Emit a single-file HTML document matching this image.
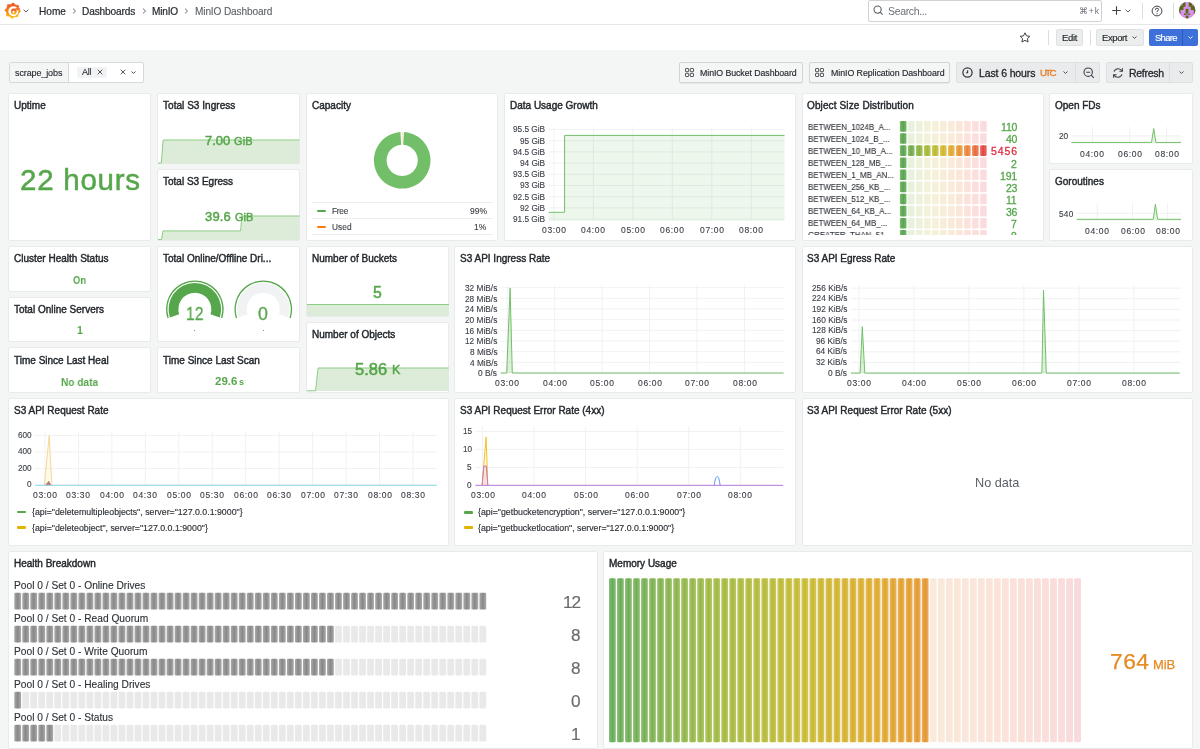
<!DOCTYPE html><html><head><meta charset="utf-8"><style>
*{box-sizing:border-box;margin:0;padding:0}
html,body{width:1200px;height:749px;overflow:hidden;background:#f4f5f5;font-family:"Liberation Sans",sans-serif;color:#24292e;position:relative}
.a{position:absolute}
.t{position:absolute;white-space:nowrap;will-change:transform}
.pn{position:absolute;background:#fff;border:1px solid #e9eaeb;border-radius:2px}
.btn{position:absolute;background:#ecedee;border:1px solid #dadcde;border-radius:2px}
svg{position:absolute;overflow:visible}
</style></head><body>
<div class="a" style="left:0.00px;top:0.00px;width:1200.00px;height:24.00px;background:#fff"></div>
<div class="a" style="left:0.00px;top:24.00px;width:1200.00px;height:1.00px;background:#e6e7e8"></div>
<div class="a" style="left:0.00px;top:25.00px;width:1200.00px;height:25.00px;background:#fff"></div>
<svg style="left:2px;top:0px" width="22" height="22" viewBox="2 0 22 22">
<defs><linearGradient id="lg" x1="0" y1="0" x2="0" y2="1"><stop offset="0" stop-color="#ee4d23"/><stop offset="0.55" stop-color="#f5871f"/><stop offset="1" stop-color="#fac70b"/></linearGradient></defs>
<path fill="url(#lg)" stroke="url(#lg)" stroke-width="0.7" stroke-linejoin="round" d="M13.29 2.83 L15.51 5.11 L18.65 5.62 L18.61 8.81 L20.47 11.39 L18.19 13.61 L17.68 16.75 L14.49 16.71 L11.91 18.57 L9.69 16.29 L6.55 15.78 L6.59 12.59 L4.73 10.01 L7.01 7.79 L7.52 4.65 L10.71 4.69 Z"/>
<circle cx="13.4" cy="11.3" r="5.0" fill="#fff"/>
<path fill="url(#lg)" d="M15.0 8.3 L19.8 8.2 L19.8 10.6 L17.0 10.8 Z"/>
<circle cx="13.8" cy="11.5" r="2.9" fill="url(#lg)"/>
<circle cx="13.6" cy="11.9" r="1.05" fill="#fff"/>
</svg>
<svg style="left:23px;top:9px" width="6" height="4" viewBox="0 0 6 4"><path d="M0.6 0.7 L3 3 L5.4 0.7" fill="none" stroke="#5a5f66" stroke-width="1"/></svg>
<div class="t" style="left:38.70px;top:6.62px;font-size:10.1px;line-height:10.1px;color:#24292e;-webkit-text-stroke:0.2px #24292e;">Home</div>
<svg style="left:71.5px;top:8px" width="5" height="6" viewBox="0 0 5 6"><path d="M1 0.6 L3.6 3 L1 5.4" fill="none" stroke="#5a5f66" stroke-width="0.9"/></svg>
<div class="t" style="left:81.60px;top:6.62px;font-size:10.1px;line-height:10.1px;color:#24292e;letter-spacing:-0.117px;-webkit-text-stroke:0.2px #24292e;">Dashboards</div>
<svg style="left:142px;top:8px" width="5" height="6" viewBox="0 0 5 6"><path d="M1 0.6 L3.6 3 L1 5.4" fill="none" stroke="#5a5f66" stroke-width="0.9"/></svg>
<div class="t" style="left:151.80px;top:6.62px;font-size:10.1px;line-height:10.1px;color:#24292e;letter-spacing:-0.184px;-webkit-text-stroke:0.2px #24292e;">MinIO</div>
<svg style="left:184.3px;top:8px" width="5" height="6" viewBox="0 0 5 6"><path d="M1 0.6 L3.6 3 L1 5.4" fill="none" stroke="#5a5f66" stroke-width="0.9"/></svg>
<div class="t" style="left:194.70px;top:6.62px;font-size:10.1px;line-height:10.1px;color:#5c6168;letter-spacing:-0.132px;-webkit-text-stroke:0.1px #5c6168;">MinIO Dashboard</div>
<div class="a" style="left:868.00px;top:0.00px;width:233.50px;height:21.50px;background:#fff;border:1px solid #d0d2d5;border-radius:2px"></div>
<svg style="left:873px;top:5.3px" width="11" height="11" viewBox="0 0 11 11"><circle cx="4.6" cy="4.6" r="3.6" fill="none" stroke="#5a5f66" stroke-width="1.1"/><path d="M7.2 7.2 L9.6 9.6" stroke="#5a5f66" stroke-width="1.2"/></svg>
<div class="t" style="left:887.50px;top:5.78px;font-size:10.5px;line-height:10.5px;color:#6b7078;letter-spacing:-0.352px;">Search...</div>
<div class="t" style="left:1078.70px;top:6.88px;font-size:8.5px;line-height:8.5px;color:#6b7078;letter-spacing:0.855px;">⌘+k</div>
<svg style="left:1111px;top:5px" width="11" height="11" viewBox="0 0 11 11"><path d="M5.5 1.2 V9.8 M1.2 5.5 H9.8" stroke="#3d4248" stroke-width="1.1"/></svg>
<svg style="left:1125px;top:9px" width="6" height="4" viewBox="0 0 6 4"><path d="M0.6 0.7 L3 3 L5.4 0.7" fill="none" stroke="#5a5f66" stroke-width="1"/></svg>
<div class="a" style="left:1142.00px;top:3.00px;width:1.00px;height:16.00px;background:#dcdee0"></div>
<svg style="left:1151px;top:5px" width="12" height="12" viewBox="0 0 12 12"><circle cx="6" cy="6" r="4.9" fill="none" stroke="#3d4248" stroke-width="1"/><path d="M4.4 4.8 Q4.4 3.2 6 3.2 Q7.6 3.2 7.6 4.6 Q7.6 5.6 6.1 6.2 V7.1" fill="none" stroke="#3d4248" stroke-width="1"/><circle cx="6.05" cy="8.7" r="0.6" fill="#3d4248"/></svg>
<div class="a" style="left:1172.50px;top:3.00px;width:1.00px;height:16.00px;background:#dcdee0"></div>
<svg style="left:1178.5px;top:2.35px" width="16.4" height="16.5" viewBox="120 80 555 560"><defs><clipPath id="av"><ellipse cx="397.5" cy="360" rx="277.5" ry="280"/></clipPath></defs>
<g clip-path="url(#av)"><rect x="100" y="60" width="600" height="600" fill="#d98ef0"/>
<path fill="#566b0e" d="M100 60 H340 V240 H270 V350 H170 V500 H100 Z"/>
<path fill="#566b0e" d="M450 60 H700 V500 H620 V350 H520 V240 H450 Z"/>
<path fill="#d98ef0" d="M100 60 H235 V200 H100 Z M560 60 H700 V200 H560 Z"/>
<rect x="345" y="310" width="95" height="155" fill="#566b0e"/>
<rect x="285" y="470" width="215" height="55" rx="20" fill="#566b0e"/>
<rect x="352" y="482" width="88" height="28" fill="#d98ef0"/>
<rect x="345" y="540" width="95" height="120" fill="#566b0e"/>
</g></svg>
<svg style="left:1019px;top:32px" width="12" height="11" viewBox="0 0 12 11"><path d="M6 0.8 L7.5 3.9 L10.9 4.3 L8.4 6.6 L9.1 10 L6 8.3 L2.9 10 L3.6 6.6 L1.1 4.3 L4.5 3.9 Z" fill="none" stroke="#3d4248" stroke-width="1" stroke-linejoin="round"/></svg>
<div class="a" style="left:1047.50px;top:30.00px;width:1.00px;height:15.00px;background:#dcdee0"></div>
<div class="a" style="left:1056.00px;top:29.00px;width:26.50px;height:16.50px;background:#eceded;border:1px solid #e0e1e3;border-radius:2px"></div>
<div class="t" style="left:1061.50px;top:33.03px;font-size:9.5px;line-height:9.5px;color:#24292e;letter-spacing:-0.290px;-webkit-text-stroke:0.15px #24292e;">Edit</div>
<div class="a" style="left:1090.30px;top:30.00px;width:1.00px;height:15.00px;background:#dcdee0"></div>
<div class="a" style="left:1096.00px;top:29.00px;width:47.70px;height:16.50px;background:#eceded;border:1px solid #e0e1e3;border-radius:2px"></div>
<div class="t" style="left:1101.50px;top:33.03px;font-size:9.5px;line-height:9.5px;color:#24292e;letter-spacing:-0.391px;-webkit-text-stroke:0.15px #24292e;">Export</div>
<svg style="left:1132px;top:36px" width="5" height="3" viewBox="0 0 5 3"><path d="M0.5 0.5 L2.5 2.4 L4.5 0.5" fill="none" stroke="#3d4248" stroke-width="0.9"/></svg>
<div class="a" style="left:1149.00px;top:29.00px;width:49.00px;height:16.50px;background:#3d71d9;border-radius:2px"></div>
<div class="a" style="left:1182.30px;top:29.00px;width:0.80px;height:16.50px;background:#2a5cc0"></div>
<div class="t" style="left:1154.50px;top:33.03px;font-size:9.5px;line-height:9.5px;color:#fff;letter-spacing:-0.712px;-webkit-text-stroke:0.15px #fff;-webkit-text-stroke-color:#fff;">Share</div>
<svg style="left:1188px;top:36px" width="5" height="3" viewBox="0 0 5 3"><path d="M0.5 0.5 L2.5 2.4 L4.5 0.5" fill="none" stroke="#fff" stroke-width="0.9"/></svg>
<div class="a" style="left:9.00px;top:62.00px;width:135.00px;height:20.80px;background:#fff;border:1px solid #d6d8db;border-radius:2px"></div>
<div class="a" style="left:9.50px;top:62.50px;width:59.20px;height:19.80px;background:#f4f5f5;border-right:1px solid #d6d8db"></div>
<div class="t" style="left:15.00px;top:68.65px;font-size:9px;line-height:9px;color:#24292e;letter-spacing:-0.113px;-webkit-text-stroke:0.12px #24292e;">scrape_jobs</div>
<div class="a" style="left:77.00px;top:66.70px;width:29.70px;height:11.30px;background:#f1f2f3;border-radius:2px"></div>
<div class="t" style="left:82.40px;top:68.35px;font-size:9px;line-height:9px;color:#24292e;letter-spacing:-0.201px;-webkit-text-stroke:0.1px #24292e;">All</div>
<svg style="left:96.5px;top:68.7px" width="6" height="6" viewBox="0 0 6 6"><path d="M0.7 0.7 L5.3 5.3 M5.3 0.7 L0.7 5.3" stroke="#3d4248" stroke-width="0.9"/></svg>
<svg style="left:119.8px;top:69.2px" width="6" height="6" viewBox="0 0 6 6"><path d="M0.7 0.7 L5.3 5.3 M5.3 0.7 L0.7 5.3" stroke="#3d4248" stroke-width="0.9"/></svg>
<svg style="left:131.3px;top:70.8px" width="5" height="3" viewBox="0 0 5 3"><path d="M0.5 0.5 L2.5 2.4 L4.5 0.5" fill="none" stroke="#3d4248" stroke-width="0.9"/></svg>
<div class="a" style="left:678.50px;top:61.80px;width:124.50px;height:21.00px;background:#f4f5f5;border:1px solid #d2d4d7;border-radius:2px;box-shadow:0 1px 1px rgba(0,0,0,0.05)"></div>
<svg style="left:685px;top:68px" width="9" height="9" viewBox="0 0 9 9"><rect x="0.5" y="0.5" width="3.2" height="3.2" rx="0.6" fill="none" stroke="#3d4248" stroke-width="0.9"/><rect x="5.3" y="0.5" width="3.2" height="3.2" rx="0.6" fill="none" stroke="#3d4248" stroke-width="0.9"/><rect x="0.5" y="5.3" width="3.2" height="3.2" rx="0.6" fill="none" stroke="#3d4248" stroke-width="0.9"/><rect x="5.3" y="5.3" width="3.2" height="3.2" rx="0.6" fill="none" stroke="#3d4248" stroke-width="0.9"/></svg>
<div class="t" style="left:700.20px;top:68.62px;font-size:8.8px;line-height:8.8px;color:#24292e;letter-spacing:-0.077px;-webkit-text-stroke:0.15px #24292e;">MinIO Bucket Dashboard</div>
<div class="a" style="left:808.50px;top:61.80px;width:141.80px;height:21.00px;background:#f4f5f5;border:1px solid #d2d4d7;border-radius:2px;box-shadow:0 1px 1px rgba(0,0,0,0.05)"></div>
<svg style="left:815px;top:68px" width="9" height="9" viewBox="0 0 9 9"><rect x="0.5" y="0.5" width="3.2" height="3.2" rx="0.6" fill="none" stroke="#3d4248" stroke-width="0.9"/><rect x="5.3" y="0.5" width="3.2" height="3.2" rx="0.6" fill="none" stroke="#3d4248" stroke-width="0.9"/><rect x="0.5" y="5.3" width="3.2" height="3.2" rx="0.6" fill="none" stroke="#3d4248" stroke-width="0.9"/><rect x="5.3" y="5.3" width="3.2" height="3.2" rx="0.6" fill="none" stroke="#3d4248" stroke-width="0.9"/></svg>
<div class="t" style="left:830.70px;top:68.62px;font-size:8.8px;line-height:8.8px;color:#24292e;letter-spacing:-0.052px;-webkit-text-stroke:0.15px #24292e;">MinIO Replication Dashboard</div>
<div class="a" style="left:956.30px;top:62.30px;width:143.70px;height:20.60px;background:#eaebec;border:1px solid #dfe0e2;border-radius:2px"></div>
<div class="a" style="left:1075.30px;top:62.30px;width:0.80px;height:20.60px;background:#dcdee0"></div>
<svg style="left:962.4px;top:66.9px" width="11" height="11" viewBox="0 0 11 11"><circle cx="5.5" cy="5.5" r="4.6" fill="none" stroke="#33383e" stroke-width="1.25"/><path d="M5.6 3.2 V5.7 H4.1" fill="none" stroke="#33383e" stroke-width="1.1"/></svg>
<div class="t" style="left:979.00px;top:67.78px;font-size:10.5px;line-height:10.5px;color:#24292e;letter-spacing:-0.126px;-webkit-text-stroke:0.3px #24292e;">Last 6 hours</div>
<div class="t" style="left:1040.00px;top:68.37px;font-size:9.8px;line-height:9.8px;color:#e8822f;letter-spacing:-1.720px;-webkit-text-stroke:0.35px #e8822f;">UTC</div>
<svg style="left:1062.5px;top:71px" width="5" height="3" viewBox="0 0 5 3"><path d="M0.5 0.5 L2.5 2.4 L4.5 0.5" fill="none" stroke="#3d4248" stroke-width="0.9"/></svg>
<svg style="left:1082.5px;top:66.8px" width="12" height="12" viewBox="0 0 12 12"><circle cx="5.2" cy="5.2" r="4.2" fill="none" stroke="#3d4248" stroke-width="1.1"/><path d="M3.2 5.2 H7.2 M8.2 8.2 L10.8 10.8" stroke="#3d4248" stroke-width="1.1"/></svg>
<div class="a" style="left:1106.00px;top:62.30px;width:86.70px;height:20.60px;background:#eaebec;border:1px solid #dfe0e2;border-radius:2px"></div>
<div class="a" style="left:1169.20px;top:62.30px;width:0.80px;height:20.60px;background:#dcdee0"></div>
<svg style="left:1112px;top:66.8px" width="12" height="12" viewBox="0 0 12 12"><path d="M2 4.6 A4.4 4.4 0 0 1 10 4 M10 7.4 A4.4 4.4 0 0 1 2 8" fill="none" stroke="#3d4248" stroke-width="1.1"/><path d="M10.4 1.2 V4.3 H7.4 M1.6 10.8 V7.7 H4.6" fill="none" stroke="#3d4248" stroke-width="1.1"/></svg>
<div class="t" style="left:1129.00px;top:67.78px;font-size:10.5px;line-height:10.5px;color:#24292e;letter-spacing:-0.294px;-webkit-text-stroke:0.3px #24292e;">Refresh</div>
<svg style="left:1178.7px;top:71px" width="5" height="3" viewBox="0 0 5 3"><path d="M0.5 0.5 L2.5 2.4 L4.5 0.5" fill="none" stroke="#3d4248" stroke-width="0.9"/></svg>
<div class="pn" style="left:8.23px;top:93.10px;width:143.19px;height:147.58px"></div>
<div class="t" style="left:14.13px;top:101.20px;font-size:10px;line-height:10px;color:#24292e;letter-spacing:0.005px;-webkit-text-stroke:0.42px #24292e;">Uptime</div>
<div class="pn" style="left:156.97px;top:93.10px;width:143.19px;height:71.29px"></div>
<div class="t" style="left:162.87px;top:101.20px;font-size:10px;line-height:10px;color:#24292e;letter-spacing:0.040px;-webkit-text-stroke:0.42px #24292e;">Total S3 Ingress</div>
<div class="pn" style="left:156.97px;top:169.39px;width:143.19px;height:71.29px"></div>
<div class="t" style="left:162.87px;top:177.49px;font-size:10px;line-height:10px;color:#24292e;-webkit-text-stroke:0.42px #24292e;">Total S3 Egress</div>
<div class="pn" style="left:305.71px;top:93.10px;width:192.77px;height:147.58px"></div>
<div class="t" style="left:311.61px;top:101.20px;font-size:10px;line-height:10px;color:#24292e;-webkit-text-stroke:0.42px #24292e;">Capacity</div>
<div class="pn" style="left:504.03px;top:93.10px;width:291.93px;height:147.58px"></div>
<div class="t" style="left:509.93px;top:101.20px;font-size:10px;line-height:10px;color:#24292e;-webkit-text-stroke:0.42px #24292e;">Data Usage Growth</div>
<div class="pn" style="left:801.51px;top:93.10px;width:242.35px;height:147.58px"></div>
<div class="t" style="left:807.41px;top:101.20px;font-size:10px;line-height:10px;color:#24292e;letter-spacing:0.125px;-webkit-text-stroke:0.42px #24292e;">Object Size Distribution</div>
<div class="pn" style="left:1049.41px;top:93.10px;width:143.19px;height:71.29px"></div>
<div class="t" style="left:1055.31px;top:101.20px;font-size:10px;line-height:10px;color:#24292e;-webkit-text-stroke:0.42px #24292e;">Open FDs</div>
<div class="pn" style="left:1049.41px;top:169.39px;width:143.19px;height:71.29px"></div>
<div class="t" style="left:1055.31px;top:177.49px;font-size:10px;line-height:10px;color:#24292e;-webkit-text-stroke:0.42px #24292e;">Goroutines</div>
<div class="pn" style="left:8.23px;top:245.68px;width:143.19px;height:45.86px"></div>
<div class="t" style="left:14.13px;top:253.78px;font-size:10px;line-height:10px;color:#24292e;-webkit-text-stroke:0.42px #24292e;">Cluster Health Status</div>
<div class="pn" style="left:8.23px;top:296.54px;width:143.19px;height:45.86px"></div>
<div class="t" style="left:14.13px;top:304.64px;font-size:10px;line-height:10px;color:#24292e;-webkit-text-stroke:0.42px #24292e;">Total Online Servers</div>
<div class="pn" style="left:8.23px;top:347.40px;width:143.19px;height:45.86px"></div>
<div class="t" style="left:14.13px;top:355.50px;font-size:10px;line-height:10px;color:#24292e;-webkit-text-stroke:0.42px #24292e;">Time Since Last Heal</div>
<div class="pn" style="left:156.97px;top:245.68px;width:143.19px;height:96.72px"></div>
<div class="t" style="left:162.87px;top:253.78px;font-size:10px;line-height:10px;color:#24292e;-webkit-text-stroke:0.42px #24292e;">Total Online/Offline Dri...</div>
<div class="pn" style="left:156.97px;top:347.40px;width:143.19px;height:45.86px"></div>
<div class="t" style="left:162.87px;top:355.50px;font-size:10px;line-height:10px;color:#24292e;-webkit-text-stroke:0.42px #24292e;">Time Since Last Scan</div>
<div class="pn" style="left:305.71px;top:245.68px;width:143.19px;height:71.29px"></div>
<div class="t" style="left:311.61px;top:253.78px;font-size:10px;line-height:10px;color:#24292e;-webkit-text-stroke:0.42px #24292e;">Number of Buckets</div>
<div class="pn" style="left:305.71px;top:321.97px;width:143.19px;height:71.29px"></div>
<div class="t" style="left:311.61px;top:330.07px;font-size:10px;line-height:10px;color:#24292e;-webkit-text-stroke:0.42px #24292e;">Number of Objects</div>
<div class="pn" style="left:454.45px;top:245.68px;width:341.51px;height:147.58px"></div>
<div class="t" style="left:460.35px;top:253.78px;font-size:10px;line-height:10px;color:#24292e;-webkit-text-stroke:0.42px #24292e;">S3 API Ingress Rate</div>
<div class="pn" style="left:801.51px;top:245.68px;width:391.09px;height:147.58px"></div>
<div class="t" style="left:807.41px;top:253.78px;font-size:10px;line-height:10px;color:#24292e;-webkit-text-stroke:0.42px #24292e;">S3 API Egress Rate</div>
<div class="pn" style="left:8.23px;top:398.26px;width:440.67px;height:147.58px"></div>
<div class="t" style="left:14.13px;top:406.36px;font-size:10px;line-height:10px;color:#24292e;-webkit-text-stroke:0.42px #24292e;">S3 API Request Rate</div>
<div class="pn" style="left:454.45px;top:398.26px;width:341.51px;height:147.58px"></div>
<div class="t" style="left:460.35px;top:406.36px;font-size:10px;line-height:10px;color:#24292e;-webkit-text-stroke:0.42px #24292e;">S3 API Request Error Rate (4xx)</div>
<div class="pn" style="left:801.51px;top:398.26px;width:391.09px;height:147.58px"></div>
<div class="t" style="left:807.41px;top:406.36px;font-size:10px;line-height:10px;color:#24292e;-webkit-text-stroke:0.42px #24292e;">S3 API Request Error Rate (5xx)</div>
<div class="pn" style="left:8.23px;top:550.84px;width:589.41px;height:198.44px"></div>
<div class="t" style="left:14.13px;top:558.94px;font-size:10px;line-height:10px;color:#24292e;-webkit-text-stroke:0.42px #24292e;">Health Breakdown</div>
<div class="pn" style="left:603.19px;top:550.84px;width:589.41px;height:198.44px"></div>
<div class="t" style="left:609.09px;top:558.94px;font-size:10px;line-height:10px;color:#24292e;-webkit-text-stroke:0.42px #24292e;">Memory Usage</div>
<div class="t" style="left:19.90px;top:164.73px;font-size:29.5px;line-height:29.5px;color:#56a64b;letter-spacing:0.758px;-webkit-text-stroke:0.5px #56a64b;">22 hours</div>
<svg style="left:158.00px;top:138.20px" width="141.80" height="25.60" viewBox="0 0 141.80 25.60"><path d="M0.00 25.10 L3.30 25.10 L5.10 2.00 L141.60 2.00 L141.60 25.60 L0.00 25.60 Z" fill="#dcecd8"/><path d="M0.00 25.10 L3.30 25.10 L5.10 2.00 L141.60 2.00" fill="none" stroke="#8ccc83" stroke-width="1"/></svg>
<div class="t" style="left:204.75px;top:133.95px;font-size:13px;line-height:13px;color:#56a64b;letter-spacing:-0.016px;-webkit-text-stroke:0.5px #56a64b;">7.00</div>
<div class="t" style="left:234.40px;top:135.65px;font-size:11px;line-height:11px;color:#56a64b;letter-spacing:0.181px;-webkit-text-stroke:0.45px #56a64b;">GiB</div>
<svg style="left:158.00px;top:214.30px" width="141.80" height="26.00" viewBox="0 0 141.80 26.00"><path d="M0.00 25.50 L3.50 25.50 L5.00 16.90 L82.60 16.90 L83.90 2.00 L141.60 2.00 L141.60 26.00 L0.00 26.00 Z" fill="#dcecd8"/><path d="M0.00 25.50 L3.50 25.50 L5.00 16.90 L82.60 16.90 L83.90 2.00 L141.60 2.00" fill="none" stroke="#8ccc83" stroke-width="1"/></svg>
<div class="t" style="left:204.75px;top:210.45px;font-size:13px;line-height:13px;color:#56a64b;letter-spacing:0.184px;-webkit-text-stroke:0.5px #56a64b;">39.6</div>
<div class="t" style="left:234.75px;top:212.15px;font-size:11px;line-height:11px;color:#56a64b;letter-spacing:-0.019px;-webkit-text-stroke:0.45px #56a64b;">GiB</div>
<svg style="left:370.00px;top:128.00px" width="64.00" height="64.00" viewBox="0 0 64.00 64.00"><path d="M33.98 4.06 A28.3 28.3 0 1 1 30.42 4.06 L31.22 16.73 A15.6 15.6 0 1 0 33.18 16.73 Z" fill="#73bf69"/><path d="M31.71 4.00 A28.3 28.3 0 0 1 32.69 4.00 L32.47 16.70 A15.6 15.6 0 0 0 31.93 16.70 Z" fill="#fbd6b8"/></svg>
<div class="a" style="left:311.50px;top:201.80px;width:181.20px;height:1.00px;background:#ececee"></div>
<div class="a" style="left:311.50px;top:218.10px;width:181.20px;height:1.00px;background:#ececee"></div>
<div class="a" style="left:311.50px;top:233.80px;width:181.20px;height:1.00px;background:#ececee"></div>
<div class="a" style="left:316.70px;top:209.50px;width:9.40px;height:2.00px;background:#56a64b;border-radius:1px"></div>
<div class="a" style="left:316.70px;top:225.50px;width:9.40px;height:2.00px;background:#ff780a;border-radius:1px"></div>
<div class="t" style="left:331.80px;top:207.25px;font-size:8.3px;line-height:8.3px;color:#3a3f46;letter-spacing:-0.255px;-webkit-text-stroke:0.12px #3a3f46;">Free</div>
<div class="t" style="left:331.80px;top:223.25px;font-size:8.3px;line-height:8.3px;color:#3a3f46;letter-spacing:0.042px;-webkit-text-stroke:0.12px #3a3f46;">Used</div>
<div class="t" style="left:469.69px;top:207.08px;font-size:8.5px;line-height:8.5px;color:#3a3f46;-webkit-text-stroke:0.12px #3a3f46;">99%</div>
<div class="t" style="left:474.41px;top:223.08px;font-size:8.5px;line-height:8.5px;color:#3a3f46;-webkit-text-stroke:0.12px #3a3f46;">1%</div>
<svg style="left:0.00px;top:0.00px" width="1.00" height="1.00" viewBox="0 0 1.00 1.00"></svg>
<svg style="left:0;top:0" width="1200" height="749" viewBox="0 0 1200 749"><path d="M548.70 129.50 H784.50" stroke="#f0f1f2" stroke-width="1"/><path d="M548.70 140.70 H784.50" stroke="#f0f1f2" stroke-width="1"/><path d="M548.70 151.90 H784.50" stroke="#f0f1f2" stroke-width="1"/><path d="M548.70 163.10 H784.50" stroke="#f0f1f2" stroke-width="1"/><path d="M548.70 174.30 H784.50" stroke="#f0f1f2" stroke-width="1"/><path d="M548.70 185.50 H784.50" stroke="#f0f1f2" stroke-width="1"/><path d="M548.70 196.70 H784.50" stroke="#f0f1f2" stroke-width="1"/><path d="M548.70 207.90 H784.50" stroke="#f0f1f2" stroke-width="1"/><path d="M548.70 219.10 H784.50" stroke="#f0f1f2" stroke-width="1"/><path d="M553.90 127.00 V221.00" stroke="#f0f1f2" stroke-width="1"/><path d="M593.37 127.00 V221.00" stroke="#f0f1f2" stroke-width="1"/><path d="M632.84 127.00 V221.00" stroke="#f0f1f2" stroke-width="1"/><path d="M672.31 127.00 V221.00" stroke="#f0f1f2" stroke-width="1"/><path d="M711.78 127.00 V221.00" stroke="#f0f1f2" stroke-width="1"/><path d="M751.25 127.00 V221.00" stroke="#f0f1f2" stroke-width="1"/></svg>
<div class="t" style="left:513.23px;top:125.44px;font-size:8.3px;line-height:8.3px;color:#3a3f46;letter-spacing:-0.046px;-webkit-text-stroke:0.12px #3a3f46;">95.5 GiB</div>
<div class="t" style="left:520.08px;top:136.64px;font-size:8.3px;line-height:8.3px;color:#3a3f46;letter-spacing:-0.051px;-webkit-text-stroke:0.12px #3a3f46;">95 GiB</div>
<div class="t" style="left:513.23px;top:147.84px;font-size:8.3px;line-height:8.3px;color:#3a3f46;letter-spacing:-0.046px;-webkit-text-stroke:0.12px #3a3f46;">94.5 GiB</div>
<div class="t" style="left:520.08px;top:159.04px;font-size:8.3px;line-height:8.3px;color:#3a3f46;letter-spacing:-0.051px;-webkit-text-stroke:0.12px #3a3f46;">94 GiB</div>
<div class="t" style="left:513.23px;top:170.25px;font-size:8.3px;line-height:8.3px;color:#3a3f46;letter-spacing:-0.046px;-webkit-text-stroke:0.12px #3a3f46;">93.5 GiB</div>
<div class="t" style="left:520.08px;top:181.44px;font-size:8.3px;line-height:8.3px;color:#3a3f46;letter-spacing:-0.051px;-webkit-text-stroke:0.12px #3a3f46;">93 GiB</div>
<div class="t" style="left:513.23px;top:192.64px;font-size:8.3px;line-height:8.3px;color:#3a3f46;letter-spacing:-0.046px;-webkit-text-stroke:0.12px #3a3f46;">92.5 GiB</div>
<div class="t" style="left:520.08px;top:203.84px;font-size:8.3px;line-height:8.3px;color:#3a3f46;letter-spacing:-0.051px;-webkit-text-stroke:0.12px #3a3f46;">92 GiB</div>
<div class="t" style="left:513.23px;top:215.04px;font-size:8.3px;line-height:8.3px;color:#3a3f46;letter-spacing:-0.046px;-webkit-text-stroke:0.12px #3a3f46;">91.5 GiB</div>
<div class="t" style="left:541.90px;top:225.97px;font-size:8.5px;line-height:8.5px;color:#3a3f46;letter-spacing:0.683px;-webkit-text-stroke:0.12px #3a3f46;">03:00</div>
<div class="t" style="left:581.37px;top:225.97px;font-size:8.5px;line-height:8.5px;color:#3a3f46;letter-spacing:0.683px;-webkit-text-stroke:0.12px #3a3f46;">04:00</div>
<div class="t" style="left:620.84px;top:225.97px;font-size:8.5px;line-height:8.5px;color:#3a3f46;letter-spacing:0.683px;-webkit-text-stroke:0.12px #3a3f46;">05:00</div>
<div class="t" style="left:660.31px;top:225.97px;font-size:8.5px;line-height:8.5px;color:#3a3f46;letter-spacing:0.683px;-webkit-text-stroke:0.12px #3a3f46;">06:00</div>
<div class="t" style="left:699.78px;top:225.97px;font-size:8.5px;line-height:8.5px;color:#3a3f46;letter-spacing:0.683px;-webkit-text-stroke:0.12px #3a3f46;">07:00</div>
<div class="t" style="left:739.25px;top:225.97px;font-size:8.5px;line-height:8.5px;color:#3a3f46;letter-spacing:0.683px;-webkit-text-stroke:0.12px #3a3f46;">08:00</div>
<svg style="left:0;top:0" width="1200" height="749" viewBox="0 0 1200 749"><path d="M548.70 212.30 L564.60 212.30 L564.60 135.40 L784.50 135.40 L784.5 221 L548.7 221 Z" fill="rgba(115,191,105,0.13)"/><path d="M548.70 212.30 L564.60 212.30 L564.60 135.40 L784.50 135.40" fill="none" stroke="#73bf69" stroke-width="1"/></svg>
<div class="a" style="left:802px;top:110px;width:240px;height:124.5px;overflow:hidden">
<svg style="left:-802px;top:-110px" width="1200" height="749" viewBox="0 0 1200 749"><defs><linearGradient id="og0" x1="0" y1="0" x2="1" y2="0"><stop offset="0" stop-color="#7db973"/><stop offset="0.5" stop-color="#58a54c"/><stop offset="1" stop-color="#7db973"/></linearGradient><linearGradient id="og1" x1="0" y1="0" x2="1" y2="0"><stop offset="0" stop-color="#8fbd6f"/><stop offset="0.5" stop-color="#70ab47"/><stop offset="1" stop-color="#8fbd6f"/></linearGradient><linearGradient id="og2" x1="0" y1="0" x2="1" y2="0"><stop offset="0" stop-color="#a4c368"/><stop offset="0.5" stop-color="#8ab23e"/><stop offset="1" stop-color="#a4c368"/></linearGradient><linearGradient id="og3" x1="0" y1="0" x2="1" y2="0"><stop offset="0" stop-color="#b9c861"/><stop offset="0.5" stop-color="#a5b835"/><stop offset="1" stop-color="#b9c861"/></linearGradient><linearGradient id="og4" x1="0" y1="0" x2="1" y2="0"><stop offset="0" stop-color="#ccc95b"/><stop offset="0.5" stop-color="#bdba2d"/><stop offset="1" stop-color="#ccc95b"/></linearGradient><linearGradient id="og5" x1="0" y1="0" x2="1" y2="0"><stop offset="0" stop-color="#ddc65a"/><stop offset="0.5" stop-color="#d3b62b"/><stop offset="1" stop-color="#ddc65a"/></linearGradient><linearGradient id="og6" x1="0" y1="0" x2="1" y2="0"><stop offset="0" stop-color="#e8bb5c"/><stop offset="0.5" stop-color="#e1a82e"/><stop offset="1" stop-color="#e8bb5c"/></linearGradient><linearGradient id="og7" x1="0" y1="0" x2="1" y2="0"><stop offset="0" stop-color="#edad60"/><stop offset="0.5" stop-color="#e89633"/><stop offset="1" stop-color="#edad60"/></linearGradient><linearGradient id="og8" x1="0" y1="0" x2="1" y2="0"><stop offset="0" stop-color="#ef9e63"/><stop offset="0.5" stop-color="#eb8237"/><stop offset="1" stop-color="#ef9e63"/></linearGradient><linearGradient id="og9" x1="0" y1="0" x2="1" y2="0"><stop offset="0" stop-color="#ef8b65"/><stop offset="0.5" stop-color="#ea6a3a"/><stop offset="1" stop-color="#ef8b65"/></linearGradient><linearGradient id="og10" x1="0" y1="0" x2="1" y2="0"><stop offset="0" stop-color="#e96f69"/><stop offset="0.5" stop-color="#e3463f"/><stop offset="1" stop-color="#e96f69"/></linearGradient></defs><rect x="899.90" y="121.10" width="6.6" height="10.6" rx="1.2" fill="url(#og0)"/><rect x="907.92" y="121.10" width="6.6" height="10.6" rx="1.2" fill="#e8f1dc"/><rect x="915.94" y="121.10" width="6.6" height="10.6" rx="1.2" fill="#edf2db"/><rect x="923.96" y="121.10" width="6.6" height="10.6" rx="1.2" fill="#f1f2d9"/><rect x="931.98" y="121.10" width="6.6" height="10.6" rx="1.2" fill="#f5f1d8"/><rect x="940.00" y="121.10" width="6.6" height="10.6" rx="1.2" fill="#f8eed7"/><rect x="948.02" y="121.10" width="6.6" height="10.6" rx="1.2" fill="#faead8"/><rect x="956.04" y="121.10" width="6.6" height="10.6" rx="1.2" fill="#fbe6d9"/><rect x="964.06" y="121.10" width="6.6" height="10.6" rx="1.2" fill="#fce2da"/><rect x="972.08" y="121.10" width="6.6" height="10.6" rx="1.2" fill="#fcdfdc"/><rect x="980.10" y="121.10" width="6.6" height="10.6" rx="1.2" fill="#fbdcde"/><rect x="899.90" y="133.20" width="6.6" height="10.6" rx="1.2" fill="url(#og0)"/><rect x="907.92" y="133.20" width="6.6" height="10.6" rx="1.2" fill="#e8f1dc"/><rect x="915.94" y="133.20" width="6.6" height="10.6" rx="1.2" fill="#edf2db"/><rect x="923.96" y="133.20" width="6.6" height="10.6" rx="1.2" fill="#f1f2d9"/><rect x="931.98" y="133.20" width="6.6" height="10.6" rx="1.2" fill="#f5f1d8"/><rect x="940.00" y="133.20" width="6.6" height="10.6" rx="1.2" fill="#f8eed7"/><rect x="948.02" y="133.20" width="6.6" height="10.6" rx="1.2" fill="#faead8"/><rect x="956.04" y="133.20" width="6.6" height="10.6" rx="1.2" fill="#fbe6d9"/><rect x="964.06" y="133.20" width="6.6" height="10.6" rx="1.2" fill="#fce2da"/><rect x="972.08" y="133.20" width="6.6" height="10.6" rx="1.2" fill="#fcdfdc"/><rect x="980.10" y="133.20" width="6.6" height="10.6" rx="1.2" fill="#fbdcde"/><rect x="899.90" y="145.30" width="6.6" height="10.6" rx="1.2" fill="url(#og0)"/><rect x="907.92" y="145.30" width="6.6" height="10.6" rx="1.2" fill="url(#og1)"/><rect x="915.94" y="145.30" width="6.6" height="10.6" rx="1.2" fill="url(#og2)"/><rect x="923.96" y="145.30" width="6.6" height="10.6" rx="1.2" fill="url(#og3)"/><rect x="931.98" y="145.30" width="6.6" height="10.6" rx="1.2" fill="url(#og4)"/><rect x="940.00" y="145.30" width="6.6" height="10.6" rx="1.2" fill="url(#og5)"/><rect x="948.02" y="145.30" width="6.6" height="10.6" rx="1.2" fill="url(#og6)"/><rect x="956.04" y="145.30" width="6.6" height="10.6" rx="1.2" fill="url(#og7)"/><rect x="964.06" y="145.30" width="6.6" height="10.6" rx="1.2" fill="url(#og8)"/><rect x="972.08" y="145.30" width="6.6" height="10.6" rx="1.2" fill="url(#og9)"/><rect x="980.10" y="145.30" width="6.6" height="10.6" rx="1.2" fill="url(#og10)"/><rect x="899.90" y="157.40" width="6.6" height="10.6" rx="1.2" fill="url(#og0)"/><rect x="907.92" y="157.40" width="6.6" height="10.6" rx="1.2" fill="#e8f1dc"/><rect x="915.94" y="157.40" width="6.6" height="10.6" rx="1.2" fill="#edf2db"/><rect x="923.96" y="157.40" width="6.6" height="10.6" rx="1.2" fill="#f1f2d9"/><rect x="931.98" y="157.40" width="6.6" height="10.6" rx="1.2" fill="#f5f1d8"/><rect x="940.00" y="157.40" width="6.6" height="10.6" rx="1.2" fill="#f8eed7"/><rect x="948.02" y="157.40" width="6.6" height="10.6" rx="1.2" fill="#faead8"/><rect x="956.04" y="157.40" width="6.6" height="10.6" rx="1.2" fill="#fbe6d9"/><rect x="964.06" y="157.40" width="6.6" height="10.6" rx="1.2" fill="#fce2da"/><rect x="972.08" y="157.40" width="6.6" height="10.6" rx="1.2" fill="#fcdfdc"/><rect x="980.10" y="157.40" width="6.6" height="10.6" rx="1.2" fill="#fbdcde"/><rect x="899.90" y="169.50" width="6.6" height="10.6" rx="1.2" fill="url(#og0)"/><rect x="907.92" y="169.50" width="6.6" height="10.6" rx="1.2" fill="#e8f1dc"/><rect x="915.94" y="169.50" width="6.6" height="10.6" rx="1.2" fill="#edf2db"/><rect x="923.96" y="169.50" width="6.6" height="10.6" rx="1.2" fill="#f1f2d9"/><rect x="931.98" y="169.50" width="6.6" height="10.6" rx="1.2" fill="#f5f1d8"/><rect x="940.00" y="169.50" width="6.6" height="10.6" rx="1.2" fill="#f8eed7"/><rect x="948.02" y="169.50" width="6.6" height="10.6" rx="1.2" fill="#faead8"/><rect x="956.04" y="169.50" width="6.6" height="10.6" rx="1.2" fill="#fbe6d9"/><rect x="964.06" y="169.50" width="6.6" height="10.6" rx="1.2" fill="#fce2da"/><rect x="972.08" y="169.50" width="6.6" height="10.6" rx="1.2" fill="#fcdfdc"/><rect x="980.10" y="169.50" width="6.6" height="10.6" rx="1.2" fill="#fbdcde"/><rect x="899.90" y="181.60" width="6.6" height="10.6" rx="1.2" fill="url(#og0)"/><rect x="907.92" y="181.60" width="6.6" height="10.6" rx="1.2" fill="#e8f1dc"/><rect x="915.94" y="181.60" width="6.6" height="10.6" rx="1.2" fill="#edf2db"/><rect x="923.96" y="181.60" width="6.6" height="10.6" rx="1.2" fill="#f1f2d9"/><rect x="931.98" y="181.60" width="6.6" height="10.6" rx="1.2" fill="#f5f1d8"/><rect x="940.00" y="181.60" width="6.6" height="10.6" rx="1.2" fill="#f8eed7"/><rect x="948.02" y="181.60" width="6.6" height="10.6" rx="1.2" fill="#faead8"/><rect x="956.04" y="181.60" width="6.6" height="10.6" rx="1.2" fill="#fbe6d9"/><rect x="964.06" y="181.60" width="6.6" height="10.6" rx="1.2" fill="#fce2da"/><rect x="972.08" y="181.60" width="6.6" height="10.6" rx="1.2" fill="#fcdfdc"/><rect x="980.10" y="181.60" width="6.6" height="10.6" rx="1.2" fill="#fbdcde"/><rect x="899.90" y="193.70" width="6.6" height="10.6" rx="1.2" fill="url(#og0)"/><rect x="907.92" y="193.70" width="6.6" height="10.6" rx="1.2" fill="#e8f1dc"/><rect x="915.94" y="193.70" width="6.6" height="10.6" rx="1.2" fill="#edf2db"/><rect x="923.96" y="193.70" width="6.6" height="10.6" rx="1.2" fill="#f1f2d9"/><rect x="931.98" y="193.70" width="6.6" height="10.6" rx="1.2" fill="#f5f1d8"/><rect x="940.00" y="193.70" width="6.6" height="10.6" rx="1.2" fill="#f8eed7"/><rect x="948.02" y="193.70" width="6.6" height="10.6" rx="1.2" fill="#faead8"/><rect x="956.04" y="193.70" width="6.6" height="10.6" rx="1.2" fill="#fbe6d9"/><rect x="964.06" y="193.70" width="6.6" height="10.6" rx="1.2" fill="#fce2da"/><rect x="972.08" y="193.70" width="6.6" height="10.6" rx="1.2" fill="#fcdfdc"/><rect x="980.10" y="193.70" width="6.6" height="10.6" rx="1.2" fill="#fbdcde"/><rect x="899.90" y="205.80" width="6.6" height="10.6" rx="1.2" fill="url(#og0)"/><rect x="907.92" y="205.80" width="6.6" height="10.6" rx="1.2" fill="#e8f1dc"/><rect x="915.94" y="205.80" width="6.6" height="10.6" rx="1.2" fill="#edf2db"/><rect x="923.96" y="205.80" width="6.6" height="10.6" rx="1.2" fill="#f1f2d9"/><rect x="931.98" y="205.80" width="6.6" height="10.6" rx="1.2" fill="#f5f1d8"/><rect x="940.00" y="205.80" width="6.6" height="10.6" rx="1.2" fill="#f8eed7"/><rect x="948.02" y="205.80" width="6.6" height="10.6" rx="1.2" fill="#faead8"/><rect x="956.04" y="205.80" width="6.6" height="10.6" rx="1.2" fill="#fbe6d9"/><rect x="964.06" y="205.80" width="6.6" height="10.6" rx="1.2" fill="#fce2da"/><rect x="972.08" y="205.80" width="6.6" height="10.6" rx="1.2" fill="#fcdfdc"/><rect x="980.10" y="205.80" width="6.6" height="10.6" rx="1.2" fill="#fbdcde"/><rect x="899.90" y="217.90" width="6.6" height="10.6" rx="1.2" fill="url(#og0)"/><rect x="907.92" y="217.90" width="6.6" height="10.6" rx="1.2" fill="#e8f1dc"/><rect x="915.94" y="217.90" width="6.6" height="10.6" rx="1.2" fill="#edf2db"/><rect x="923.96" y="217.90" width="6.6" height="10.6" rx="1.2" fill="#f1f2d9"/><rect x="931.98" y="217.90" width="6.6" height="10.6" rx="1.2" fill="#f5f1d8"/><rect x="940.00" y="217.90" width="6.6" height="10.6" rx="1.2" fill="#f8eed7"/><rect x="948.02" y="217.90" width="6.6" height="10.6" rx="1.2" fill="#faead8"/><rect x="956.04" y="217.90" width="6.6" height="10.6" rx="1.2" fill="#fbe6d9"/><rect x="964.06" y="217.90" width="6.6" height="10.6" rx="1.2" fill="#fce2da"/><rect x="972.08" y="217.90" width="6.6" height="10.6" rx="1.2" fill="#fcdfdc"/><rect x="980.10" y="217.90" width="6.6" height="10.6" rx="1.2" fill="#fbdcde"/><rect x="899.90" y="230.00" width="6.6" height="10.6" rx="1.2" fill="url(#og0)"/><rect x="907.92" y="230.00" width="6.6" height="10.6" rx="1.2" fill="#e8f1dc"/><rect x="915.94" y="230.00" width="6.6" height="10.6" rx="1.2" fill="#edf2db"/><rect x="923.96" y="230.00" width="6.6" height="10.6" rx="1.2" fill="#f1f2d9"/><rect x="931.98" y="230.00" width="6.6" height="10.6" rx="1.2" fill="#f5f1d8"/><rect x="940.00" y="230.00" width="6.6" height="10.6" rx="1.2" fill="#f8eed7"/><rect x="948.02" y="230.00" width="6.6" height="10.6" rx="1.2" fill="#faead8"/><rect x="956.04" y="230.00" width="6.6" height="10.6" rx="1.2" fill="#fbe6d9"/><rect x="964.06" y="230.00" width="6.6" height="10.6" rx="1.2" fill="#fce2da"/><rect x="972.08" y="230.00" width="6.6" height="10.6" rx="1.2" fill="#fcdfdc"/><rect x="980.10" y="230.00" width="6.6" height="10.6" rx="1.2" fill="#fbdcde"/></svg>
<div class="t" style="left:5.80px;top:12.89px;font-size:8.6px;line-height:8.6px;color:#30353b;-webkit-text-stroke:0.12px #30353b;transform:scaleX(0.9170);transform-origin:0 0;">BETWEEN_1024B_A...</div>
<div class="t" style="left:198.60px;top:12.27px;font-size:10.5px;line-height:10.5px;color:#56a64b;letter-spacing:-0.167px;-webkit-text-stroke:0.3px #56a64b;">110</div>
<div class="t" style="left:5.80px;top:24.94px;font-size:8.6px;line-height:8.6px;color:#30353b;-webkit-text-stroke:0.12px #30353b;transform:scaleX(0.9170);transform-origin:0 0;">BETWEEN_1024_B_...</div>
<div class="t" style="left:203.56px;top:24.37px;font-size:10.5px;line-height:10.5px;color:#56a64b;letter-spacing:-0.234px;-webkit-text-stroke:0.3px #56a64b;">40</div>
<div class="t" style="left:5.80px;top:36.99px;font-size:8.6px;line-height:8.6px;color:#30353b;-webkit-text-stroke:0.12px #30353b;transform:scaleX(0.9170);transform-origin:0 0;">BETWEEN_10_MB_A...</div>
<div class="t" style="left:188.84px;top:36.47px;font-size:10.5px;line-height:10.5px;color:#e02f44;letter-spacing:0.934px;-webkit-text-stroke:0.3px #e02f44;">5456</div>
<div class="t" style="left:5.80px;top:49.04px;font-size:8.6px;line-height:8.6px;color:#30353b;-webkit-text-stroke:0.12px #30353b;transform:scaleX(0.9170);transform-origin:0 0;">BETWEEN_128_MB_...</div>
<div class="t" style="left:209.16px;top:48.58px;font-size:10.5px;line-height:10.5px;color:#56a64b;-webkit-text-stroke:0.3px #56a64b;">2</div>
<div class="t" style="left:5.80px;top:61.09px;font-size:8.6px;line-height:8.6px;color:#30353b;-webkit-text-stroke:0.12px #30353b;transform:scaleX(0.9170);transform-origin:0 0;">BETWEEN_1_MB_AN...</div>
<div class="t" style="left:197.83px;top:60.67px;font-size:10.5px;line-height:10.5px;color:#56a64b;letter-spacing:-0.175px;-webkit-text-stroke:0.3px #56a64b;">191</div>
<div class="t" style="left:5.80px;top:73.14px;font-size:8.6px;line-height:8.6px;color:#30353b;-webkit-text-stroke:0.12px #30353b;transform:scaleX(0.9170);transform-origin:0 0;">BETWEEN_256_KB_...</div>
<div class="t" style="left:203.56px;top:72.77px;font-size:10.5px;line-height:10.5px;color:#56a64b;letter-spacing:-0.234px;-webkit-text-stroke:0.3px #56a64b;">23</div>
<div class="t" style="left:5.80px;top:85.19px;font-size:8.6px;line-height:8.6px;color:#30353b;-webkit-text-stroke:0.12px #30353b;transform:scaleX(0.9170);transform-origin:0 0;">BETWEEN_512_KB_...</div>
<div class="t" style="left:204.32px;top:84.87px;font-size:10.5px;line-height:10.5px;color:#56a64b;letter-spacing:-0.218px;-webkit-text-stroke:0.3px #56a64b;">11</div>
<div class="t" style="left:5.80px;top:97.24px;font-size:8.6px;line-height:8.6px;color:#30353b;-webkit-text-stroke:0.12px #30353b;transform:scaleX(0.9170);transform-origin:0 0;">BETWEEN_64_KB_A...</div>
<div class="t" style="left:203.56px;top:96.97px;font-size:10.5px;line-height:10.5px;color:#56a64b;letter-spacing:-0.234px;-webkit-text-stroke:0.3px #56a64b;">36</div>
<div class="t" style="left:5.80px;top:109.29px;font-size:8.6px;line-height:8.6px;color:#30353b;-webkit-text-stroke:0.12px #30353b;transform:scaleX(0.9170);transform-origin:0 0;">BETWEEN_64_MB_...</div>
<div class="t" style="left:209.16px;top:109.08px;font-size:10.5px;line-height:10.5px;color:#56a64b;-webkit-text-stroke:0.3px #56a64b;">7</div>
<div class="t" style="left:5.80px;top:121.34px;font-size:8.6px;line-height:8.6px;color:#30353b;-webkit-text-stroke:0.12px #30353b;transform:scaleX(0.9170);transform-origin:0 0;">GREATER_THAN_51...</div>
<div class="t" style="left:209.16px;top:121.17px;font-size:10.5px;line-height:10.5px;color:#56a64b;-webkit-text-stroke:0.3px #56a64b;">8</div>
</div>
<svg style="left:0.00px;top:0.00px" width="1.00" height="1.00" viewBox="0 0 1.00 1.00"></svg>
<svg style="left:0;top:0" width="1200" height="749" viewBox="0 0 1200 749"><path d="M1071.40 135.90 H1181.00" stroke="#f0f1f2" stroke-width="1"/><path d="M1092.40 126.75 V143.00" stroke="#f0f1f2" stroke-width="1"/><path d="M1129.70 126.75 V143.00" stroke="#f0f1f2" stroke-width="1"/><path d="M1166.70 126.75 V143.00" stroke="#f0f1f2" stroke-width="1"/></svg>
<div class="t" style="left:1058.80px;top:132.34px;font-size:8.3px;line-height:8.3px;color:#3a3f46;letter-spacing:-0.231px;-webkit-text-stroke:0.12px #3a3f46;">20</div>
<div class="t" style="left:1080.40px;top:150.38px;font-size:8.5px;line-height:8.5px;color:#3a3f46;letter-spacing:0.683px;-webkit-text-stroke:0.12px #3a3f46;">04:00</div>
<div class="t" style="left:1117.70px;top:150.38px;font-size:8.5px;line-height:8.5px;color:#3a3f46;letter-spacing:0.683px;-webkit-text-stroke:0.12px #3a3f46;">06:00</div>
<div class="t" style="left:1154.70px;top:150.38px;font-size:8.5px;line-height:8.5px;color:#3a3f46;letter-spacing:0.683px;-webkit-text-stroke:0.12px #3a3f46;">08:00</div>
<svg style="left:0;top:0" width="1200" height="749" viewBox="0 0 1200 749"><path d="M1071.40 142.40 L1151.50 142.40 L1153.70 128.50 L1155.90 142.40 L1181.00 142.40 L1181 143.5 L1071.4 143.5 Z" fill="rgba(115,191,105,0.2)"/><path d="M1071.40 142.40 L1151.50 142.40 L1153.70 128.50 L1155.90 142.40 L1181.00 142.40" fill="none" stroke="#73bf69" stroke-width="1"/></svg>
<svg style="left:0.00px;top:0.00px" width="1.00" height="1.00" viewBox="0 0 1.00 1.00"></svg>
<svg style="left:0;top:0" width="1200" height="749" viewBox="0 0 1200 749"><path d="M1076.75 213.30 H1181.00" stroke="#f0f1f2" stroke-width="1"/><path d="M1097.30 203.00 V220.00" stroke="#f0f1f2" stroke-width="1"/><path d="M1132.50 203.00 V220.00" stroke="#f0f1f2" stroke-width="1"/><path d="M1167.60 203.00 V220.00" stroke="#f0f1f2" stroke-width="1"/></svg>
<div class="t" style="left:1058.80px;top:209.75px;font-size:8.3px;line-height:8.3px;color:#3a3f46;letter-spacing:0.227px;-webkit-text-stroke:0.12px #3a3f46;">540</div>
<div class="t" style="left:1085.30px;top:226.68px;font-size:8.5px;line-height:8.5px;color:#3a3f46;letter-spacing:0.683px;-webkit-text-stroke:0.12px #3a3f46;">04:00</div>
<div class="t" style="left:1120.50px;top:226.68px;font-size:8.5px;line-height:8.5px;color:#3a3f46;letter-spacing:0.683px;-webkit-text-stroke:0.12px #3a3f46;">06:00</div>
<div class="t" style="left:1155.60px;top:226.68px;font-size:8.5px;line-height:8.5px;color:#3a3f46;letter-spacing:0.683px;-webkit-text-stroke:0.12px #3a3f46;">08:00</div>
<svg style="left:0;top:0" width="1200" height="749" viewBox="0 0 1200 749"><path d="M1076.75 219.30 L1153.20 219.30 L1155.40 204.30 L1157.60 219.30 L1181.00 219.30 L1181 220.5 L1076.75 220.5 Z" fill="rgba(115,191,105,0.2)"/><path d="M1076.75 219.30 L1153.20 219.30 L1155.40 204.30 L1157.60 219.30 L1181.00 219.30" fill="none" stroke="#73bf69" stroke-width="1"/></svg>
<div class="t" style="left:73.25px;top:274.97px;font-size:10.5px;line-height:10.5px;color:#56a64b;font-weight:bold;transform:scaleX(0.8916);transform-origin:0 0;">On</div>
<div class="t" style="left:76.78px;top:325.18px;font-size:10.5px;line-height:10.5px;color:#56a64b;font-weight:bold;">1</div>
<div class="t" style="left:61.30px;top:376.57px;font-size:10.5px;line-height:10.5px;color:#56a64b;font-weight:bold;transform:scaleX(0.9610);transform-origin:0 0;">No data</div>
<div class="t" style="left:214.70px;top:376.32px;font-size:10.8px;line-height:10.8px;color:#56a64b;font-weight:bold;transform:scaleX(1.0705);transform-origin:0 0;">29.6</div>
<div class="t" style="left:239.20px;top:377.85px;font-size:9.0px;line-height:9.0px;color:#56a64b;font-weight:bold;">s</div>
<svg style="left:0;top:0" width="1200" height="749" viewBox="0 0 1200 749"><path d="M167.46 318.15 A28.8 28.8 0 1 1 222.24 318.15 L221.00 317.75 A27.5 27.5 0 1 0 168.70 317.75 Z" fill="#56a64b"/><path d="M169.84 317.38 A26.3 26.3 0 1 1 219.86 317.38 L210.54 314.35 A16.5 16.5 0 1 0 179.16 314.35 Z" fill="#f1f2f3"/><path d="M169.84 317.38 A26.3 26.3 0 1 1 219.86 317.38 L210.54 314.35 A16.5 16.5 0 1 0 179.16 314.35 Z" fill="#56a64b"/></svg>
<div class="t" style="left:185.90px;top:306.27px;font-size:17.8px;line-height:17.8px;color:#56a64b;-webkit-text-stroke:0.3px #56a64b;transform:scaleX(0.8789);transform-origin:0 0;">12</div>
<div class="a" style="left:194.35px;top:330.00px;width:1.00px;height:1.00px;background:#8a8f96"></div>
<svg style="left:0;top:0" width="1200" height="749" viewBox="0 0 1200 749"><path d="M235.91 318.15 A28.8 28.8 0 1 1 290.69 318.15 L289.45 317.75 A27.5 27.5 0 1 0 237.15 317.75 Z" fill="#56a64b"/><path d="M238.29 317.38 A26.3 26.3 0 1 1 288.31 317.38 L278.99 314.35 A16.5 16.5 0 1 0 247.61 314.35 Z" fill="#f1f2f3"/></svg>
<div class="t" style="left:258.13px;top:306.27px;font-size:17.8px;line-height:17.8px;color:#56a64b;-webkit-text-stroke:0.3px #56a64b;">0</div>
<div class="a" style="left:262.80px;top:330.00px;width:1.00px;height:1.00px;background:#8a8f96"></div>
<div class="a" style="left:306.90px;top:304.10px;width:141.90px;height:12.00px;background:#dcecd8"></div>
<div class="a" style="left:306.90px;top:303.60px;width:141.90px;height:1.00px;background:#8ccc83"></div>
<div class="t" style="left:372.86px;top:285.17px;font-size:15.8px;line-height:15.8px;color:#56a64b;-webkit-text-stroke:0.5px #56a64b;">5</div>
<svg style="left:306.90px;top:366.40px" width="141.90" height="25.10" viewBox="0 0 141.90 25.10"><path d="M0.00 24.80 L8.50 24.80 L11.10 2.00 L141.70 2.00 L141.70 25.10 L0.00 25.10 Z" fill="#dcecd8"/><path d="M0.00 24.80 L8.50 24.80 L11.10 2.00 L141.70 2.00" fill="none" stroke="#8ccc83" stroke-width="1"/></svg>
<div class="t" style="left:355.00px;top:360.88px;font-size:16.5px;line-height:16.5px;color:#56a64b;letter-spacing:0.030px;-webkit-text-stroke:0.55px #56a64b;">5.86</div>
<div class="t" style="left:391.60px;top:364.27px;font-size:12.5px;line-height:12.5px;color:#56a64b;-webkit-text-stroke:0.45px #56a64b;">K</div>
<svg style="left:0.00px;top:0.00px" width="1.00" height="1.00" viewBox="0 0 1.00 1.00"></svg>
<svg style="left:0;top:0" width="1200" height="749" viewBox="0 0 1200 749"><path d="M500.60 287.70 H785.00" stroke="#f0f1f2" stroke-width="1"/><path d="M500.60 298.36 H785.00" stroke="#f0f1f2" stroke-width="1"/><path d="M500.60 309.02 H785.00" stroke="#f0f1f2" stroke-width="1"/><path d="M500.60 319.69 H785.00" stroke="#f0f1f2" stroke-width="1"/><path d="M500.60 330.35 H785.00" stroke="#f0f1f2" stroke-width="1"/><path d="M500.60 341.01 H785.00" stroke="#f0f1f2" stroke-width="1"/><path d="M500.60 351.68 H785.00" stroke="#f0f1f2" stroke-width="1"/><path d="M500.60 362.34 H785.00" stroke="#f0f1f2" stroke-width="1"/><path d="M500.60 373.00 H785.00" stroke="#f0f1f2" stroke-width="1"/><path d="M507.20 285.00 V373.50" stroke="#f0f1f2" stroke-width="1"/><path d="M554.66 285.00 V373.50" stroke="#f0f1f2" stroke-width="1"/><path d="M602.12 285.00 V373.50" stroke="#f0f1f2" stroke-width="1"/><path d="M649.58 285.00 V373.50" stroke="#f0f1f2" stroke-width="1"/><path d="M697.04 285.00 V373.50" stroke="#f0f1f2" stroke-width="1"/><path d="M744.50 285.00 V373.50" stroke="#f0f1f2" stroke-width="1"/></svg>
<div class="t" style="left:464.91px;top:284.14px;font-size:8.3px;line-height:8.3px;color:#3a3f46;-webkit-text-stroke:0.12px #3a3f46;">32 MiB/s</div>
<div class="t" style="left:464.91px;top:294.81px;font-size:8.3px;line-height:8.3px;color:#3a3f46;-webkit-text-stroke:0.12px #3a3f46;">28 MiB/s</div>
<div class="t" style="left:464.91px;top:305.47px;font-size:8.3px;line-height:8.3px;color:#3a3f46;-webkit-text-stroke:0.12px #3a3f46;">24 MiB/s</div>
<div class="t" style="left:464.91px;top:316.13px;font-size:8.3px;line-height:8.3px;color:#3a3f46;-webkit-text-stroke:0.12px #3a3f46;">20 MiB/s</div>
<div class="t" style="left:464.91px;top:326.80px;font-size:8.3px;line-height:8.3px;color:#3a3f46;-webkit-text-stroke:0.12px #3a3f46;">16 MiB/s</div>
<div class="t" style="left:464.91px;top:337.46px;font-size:8.3px;line-height:8.3px;color:#3a3f46;-webkit-text-stroke:0.12px #3a3f46;">12 MiB/s</div>
<div class="t" style="left:469.53px;top:348.12px;font-size:8.3px;line-height:8.3px;color:#3a3f46;-webkit-text-stroke:0.12px #3a3f46;">8 MiB/s</div>
<div class="t" style="left:469.53px;top:358.78px;font-size:8.3px;line-height:8.3px;color:#3a3f46;-webkit-text-stroke:0.12px #3a3f46;">4 MiB/s</div>
<div class="t" style="left:478.29px;top:369.44px;font-size:8.3px;line-height:8.3px;color:#3a3f46;-webkit-text-stroke:0.12px #3a3f46;">0 B/s</div>
<div class="t" style="left:495.20px;top:379.17px;font-size:8.5px;line-height:8.5px;color:#3a3f46;letter-spacing:0.683px;-webkit-text-stroke:0.12px #3a3f46;">03:00</div>
<div class="t" style="left:542.66px;top:379.17px;font-size:8.5px;line-height:8.5px;color:#3a3f46;letter-spacing:0.683px;-webkit-text-stroke:0.12px #3a3f46;">04:00</div>
<div class="t" style="left:590.12px;top:379.17px;font-size:8.5px;line-height:8.5px;color:#3a3f46;letter-spacing:0.683px;-webkit-text-stroke:0.12px #3a3f46;">05:00</div>
<div class="t" style="left:637.58px;top:379.17px;font-size:8.5px;line-height:8.5px;color:#3a3f46;letter-spacing:0.683px;-webkit-text-stroke:0.12px #3a3f46;">06:00</div>
<div class="t" style="left:685.04px;top:379.17px;font-size:8.5px;line-height:8.5px;color:#3a3f46;letter-spacing:0.683px;-webkit-text-stroke:0.12px #3a3f46;">07:00</div>
<div class="t" style="left:732.50px;top:379.17px;font-size:8.5px;line-height:8.5px;color:#3a3f46;letter-spacing:0.683px;-webkit-text-stroke:0.12px #3a3f46;">08:00</div>
<svg style="left:0;top:0" width="1200" height="749" viewBox="0 0 1200 749"><path d="M500.60 373.00 L506.70 373.00 L510.10 288.10 L512.30 373.00 L783.50 373.00 Z" fill="rgba(115,191,105,0.25)"/><path d="M500.60 373.00 L506.70 373.00 L510.10 288.10 L512.30 373.00 L783.50 373.00" fill="none" stroke="#73bf69" stroke-width="1"/></svg>
<svg style="left:0.00px;top:0.00px" width="1.00" height="1.00" viewBox="0 0 1.00 1.00"></svg>
<svg style="left:0;top:0" width="1200" height="749" viewBox="0 0 1200 749"><path d="M850.90 288.10 H1180.50" stroke="#f0f1f2" stroke-width="1"/><path d="M850.90 298.73 H1180.50" stroke="#f0f1f2" stroke-width="1"/><path d="M850.90 309.35 H1180.50" stroke="#f0f1f2" stroke-width="1"/><path d="M850.90 319.98 H1180.50" stroke="#f0f1f2" stroke-width="1"/><path d="M850.90 330.60 H1180.50" stroke="#f0f1f2" stroke-width="1"/><path d="M850.90 341.23 H1180.50" stroke="#f0f1f2" stroke-width="1"/><path d="M850.90 351.85 H1180.50" stroke="#f0f1f2" stroke-width="1"/><path d="M850.90 362.48 H1180.50" stroke="#f0f1f2" stroke-width="1"/><path d="M850.90 373.10 H1180.50" stroke="#f0f1f2" stroke-width="1"/><path d="M858.95 285.00 V373.50" stroke="#f0f1f2" stroke-width="1"/><path d="M913.95 285.00 V373.50" stroke="#f0f1f2" stroke-width="1"/><path d="M968.95 285.00 V373.50" stroke="#f0f1f2" stroke-width="1"/><path d="M1023.95 285.00 V373.50" stroke="#f0f1f2" stroke-width="1"/><path d="M1078.95 285.00 V373.50" stroke="#f0f1f2" stroke-width="1"/><path d="M1133.95 285.00 V373.50" stroke="#f0f1f2" stroke-width="1"/></svg>
<div class="t" style="left:811.77px;top:283.65px;font-size:8.3px;line-height:8.3px;color:#3a3f46;-webkit-text-stroke:0.12px #3a3f46;">256 KiB/s</div>
<div class="t" style="left:811.77px;top:294.27px;font-size:8.3px;line-height:8.3px;color:#3a3f46;-webkit-text-stroke:0.12px #3a3f46;">224 KiB/s</div>
<div class="t" style="left:811.77px;top:304.90px;font-size:8.3px;line-height:8.3px;color:#3a3f46;-webkit-text-stroke:0.12px #3a3f46;">192 KiB/s</div>
<div class="t" style="left:811.77px;top:315.52px;font-size:8.3px;line-height:8.3px;color:#3a3f46;-webkit-text-stroke:0.12px #3a3f46;">160 KiB/s</div>
<div class="t" style="left:811.77px;top:326.15px;font-size:8.3px;line-height:8.3px;color:#3a3f46;-webkit-text-stroke:0.12px #3a3f46;">128 KiB/s</div>
<div class="t" style="left:816.39px;top:336.77px;font-size:8.3px;line-height:8.3px;color:#3a3f46;-webkit-text-stroke:0.12px #3a3f46;">96 KiB/s</div>
<div class="t" style="left:816.39px;top:347.40px;font-size:8.3px;line-height:8.3px;color:#3a3f46;-webkit-text-stroke:0.12px #3a3f46;">64 KiB/s</div>
<div class="t" style="left:816.39px;top:358.02px;font-size:8.3px;line-height:8.3px;color:#3a3f46;-webkit-text-stroke:0.12px #3a3f46;">32 KiB/s</div>
<div class="t" style="left:828.39px;top:368.65px;font-size:8.3px;line-height:8.3px;color:#3a3f46;-webkit-text-stroke:0.12px #3a3f46;">0 B/s</div>
<div class="t" style="left:846.95px;top:378.97px;font-size:8.5px;line-height:8.5px;color:#3a3f46;letter-spacing:0.683px;-webkit-text-stroke:0.12px #3a3f46;">03:00</div>
<div class="t" style="left:901.95px;top:378.97px;font-size:8.5px;line-height:8.5px;color:#3a3f46;letter-spacing:0.683px;-webkit-text-stroke:0.12px #3a3f46;">04:00</div>
<div class="t" style="left:956.95px;top:378.97px;font-size:8.5px;line-height:8.5px;color:#3a3f46;letter-spacing:0.683px;-webkit-text-stroke:0.12px #3a3f46;">05:00</div>
<div class="t" style="left:1011.95px;top:378.97px;font-size:8.5px;line-height:8.5px;color:#3a3f46;letter-spacing:0.683px;-webkit-text-stroke:0.12px #3a3f46;">06:00</div>
<div class="t" style="left:1066.95px;top:378.97px;font-size:8.5px;line-height:8.5px;color:#3a3f46;letter-spacing:0.683px;-webkit-text-stroke:0.12px #3a3f46;">07:00</div>
<div class="t" style="left:1121.95px;top:378.97px;font-size:8.5px;line-height:8.5px;color:#3a3f46;letter-spacing:0.683px;-webkit-text-stroke:0.12px #3a3f46;">08:00</div>
<svg style="left:0;top:0" width="1200" height="749" viewBox="0 0 1200 749"><path d="M850.90 373.10 L860.10 373.10 L862.30 326.70 L864.80 373.10 L1041.90 373.10 L1043.50 290.00 L1046.30 373.10 L1179.60 373.10 Z" fill="rgba(115,191,105,0.25)"/><path d="M850.90 373.10 L860.10 373.10 L862.30 326.70 L864.80 373.10 L1041.90 373.10 L1043.50 290.00 L1046.30 373.10 L1179.60 373.10" fill="none" stroke="#73bf69" stroke-width="1"/></svg>
<svg style="left:0.00px;top:0.00px" width="1.00" height="1.00" viewBox="0 0 1.00 1.00"></svg>
<svg style="left:0;top:0" width="1200" height="749" viewBox="0 0 1200 749"><path d="M34.60 435.50 H436.80" stroke="#f0f1f2" stroke-width="1"/><path d="M34.60 451.97 H436.80" stroke="#f0f1f2" stroke-width="1"/><path d="M34.60 468.44 H436.80" stroke="#f0f1f2" stroke-width="1"/><path d="M34.60 484.91 H436.80" stroke="#f0f1f2" stroke-width="1"/><path d="M45.00 431.50 V485.50" stroke="#f0f1f2" stroke-width="1"/><path d="M78.45 431.50 V485.50" stroke="#f0f1f2" stroke-width="1"/><path d="M111.90 431.50 V485.50" stroke="#f0f1f2" stroke-width="1"/><path d="M145.35 431.50 V485.50" stroke="#f0f1f2" stroke-width="1"/><path d="M178.80 431.50 V485.50" stroke="#f0f1f2" stroke-width="1"/><path d="M212.25 431.50 V485.50" stroke="#f0f1f2" stroke-width="1"/><path d="M245.70 431.50 V485.50" stroke="#f0f1f2" stroke-width="1"/><path d="M279.15 431.50 V485.50" stroke="#f0f1f2" stroke-width="1"/><path d="M312.60 431.50 V485.50" stroke="#f0f1f2" stroke-width="1"/><path d="M346.05 431.50 V485.50" stroke="#f0f1f2" stroke-width="1"/><path d="M379.50 431.50 V485.50" stroke="#f0f1f2" stroke-width="1"/><path d="M412.95 431.50 V485.50" stroke="#f0f1f2" stroke-width="1"/></svg>
<div class="t" style="left:18.22px;top:431.93px;font-size:8.2px;line-height:8.2px;color:#3a3f46;-webkit-text-stroke:0.12px #3a3f46;">600</div>
<div class="t" style="left:18.22px;top:448.40px;font-size:8.2px;line-height:8.2px;color:#3a3f46;-webkit-text-stroke:0.12px #3a3f46;">400</div>
<div class="t" style="left:18.22px;top:464.87px;font-size:8.2px;line-height:8.2px;color:#3a3f46;-webkit-text-stroke:0.12px #3a3f46;">200</div>
<div class="t" style="left:27.34px;top:481.34px;font-size:8.2px;line-height:8.2px;color:#3a3f46;-webkit-text-stroke:0.12px #3a3f46;">0</div>
<div class="t" style="left:33.00px;top:490.97px;font-size:8.5px;line-height:8.5px;color:#3a3f46;letter-spacing:0.683px;-webkit-text-stroke:0.12px #3a3f46;">03:00</div>
<div class="t" style="left:66.45px;top:490.97px;font-size:8.5px;line-height:8.5px;color:#3a3f46;letter-spacing:0.683px;-webkit-text-stroke:0.12px #3a3f46;">03:30</div>
<div class="t" style="left:99.90px;top:490.97px;font-size:8.5px;line-height:8.5px;color:#3a3f46;letter-spacing:0.683px;-webkit-text-stroke:0.12px #3a3f46;">04:00</div>
<div class="t" style="left:133.35px;top:490.97px;font-size:8.5px;line-height:8.5px;color:#3a3f46;letter-spacing:0.683px;-webkit-text-stroke:0.12px #3a3f46;">04:30</div>
<div class="t" style="left:166.80px;top:490.97px;font-size:8.5px;line-height:8.5px;color:#3a3f46;letter-spacing:0.683px;-webkit-text-stroke:0.12px #3a3f46;">05:00</div>
<div class="t" style="left:200.25px;top:490.97px;font-size:8.5px;line-height:8.5px;color:#3a3f46;letter-spacing:0.683px;-webkit-text-stroke:0.12px #3a3f46;">05:30</div>
<div class="t" style="left:233.70px;top:490.97px;font-size:8.5px;line-height:8.5px;color:#3a3f46;letter-spacing:0.683px;-webkit-text-stroke:0.12px #3a3f46;">06:00</div>
<div class="t" style="left:267.15px;top:490.97px;font-size:8.5px;line-height:8.5px;color:#3a3f46;letter-spacing:0.683px;-webkit-text-stroke:0.12px #3a3f46;">06:30</div>
<div class="t" style="left:300.60px;top:490.97px;font-size:8.5px;line-height:8.5px;color:#3a3f46;letter-spacing:0.683px;-webkit-text-stroke:0.12px #3a3f46;">07:00</div>
<div class="t" style="left:334.05px;top:490.97px;font-size:8.5px;line-height:8.5px;color:#3a3f46;letter-spacing:0.683px;-webkit-text-stroke:0.12px #3a3f46;">07:30</div>
<div class="t" style="left:367.50px;top:490.97px;font-size:8.5px;line-height:8.5px;color:#3a3f46;letter-spacing:0.683px;-webkit-text-stroke:0.12px #3a3f46;">08:00</div>
<div class="t" style="left:400.95px;top:490.97px;font-size:8.5px;line-height:8.5px;color:#3a3f46;letter-spacing:0.683px;-webkit-text-stroke:0.12px #3a3f46;">08:30</div>
<svg style="left:0;top:0" width="1200" height="749" viewBox="0 0 1200 749"><path d="M44.40 485.30 L49.20 435.70 L51.90 485.30 Z" fill="rgba(250,222,42,0.10)"/><path d="M44.40 485.30 L49.20 435.70 L51.90 485.30" fill="none" stroke="#f6d18e" stroke-width="0.9"/><path d="M45 485.3 L48.8 480.8 L51.3 485.3 Z" fill="rgba(138,77,122,0.75)"/><path d="M45.5 485.3 L48.8 482.5 L50.8 485.3" fill="none" stroke="#e0752d" stroke-width="0.6"/><path d="M35.1 485.3 H436.8" stroke="#8ad8e6" stroke-width="1"/></svg>
<div class="a" style="left:17.00px;top:510.80px;width:8.80px;height:2.60px;background:#56a64b;border-radius:1.3px"></div>
<div class="t" style="left:31.90px;top:507.92px;font-size:8.8px;line-height:8.8px;color:#2c3136;letter-spacing:0.001px;-webkit-text-stroke:0.15px #2c3136;">{api="deletemultipleobjects", server="127.0.0.1:9000"}</div>
<div class="a" style="left:17.00px;top:526.40px;width:8.80px;height:2.60px;background:#e0b400;border-radius:1.3px"></div>
<div class="t" style="left:31.90px;top:523.62px;font-size:8.8px;line-height:8.8px;color:#2c3136;-webkit-text-stroke:0.15px #2c3136;">{api="deleteobject", server="127.0.0.1:9000"}</div>
<svg style="left:0.00px;top:0.00px" width="1.00" height="1.00" viewBox="0 0 1.00 1.00"></svg>
<svg style="left:0;top:0" width="1200" height="749" viewBox="0 0 1200 749"><path d="M475.30 431.40 H783.10" stroke="#f0f1f2" stroke-width="1"/><path d="M475.30 449.43 H783.10" stroke="#f0f1f2" stroke-width="1"/><path d="M475.30 467.46 H783.10" stroke="#f0f1f2" stroke-width="1"/><path d="M475.30 485.49 H783.10" stroke="#f0f1f2" stroke-width="1"/><path d="M482.50 427.00 V485.50" stroke="#f0f1f2" stroke-width="1"/><path d="M534.06 427.00 V485.50" stroke="#f0f1f2" stroke-width="1"/><path d="M585.62 427.00 V485.50" stroke="#f0f1f2" stroke-width="1"/><path d="M637.18 427.00 V485.50" stroke="#f0f1f2" stroke-width="1"/><path d="M688.74 427.00 V485.50" stroke="#f0f1f2" stroke-width="1"/><path d="M740.30 427.00 V485.50" stroke="#f0f1f2" stroke-width="1"/></svg>
<div class="t" style="left:462.78px;top:427.83px;font-size:8.2px;line-height:8.2px;color:#3a3f46;-webkit-text-stroke:0.12px #3a3f46;">15</div>
<div class="t" style="left:462.78px;top:445.86px;font-size:8.2px;line-height:8.2px;color:#3a3f46;-webkit-text-stroke:0.12px #3a3f46;">10</div>
<div class="t" style="left:467.34px;top:463.89px;font-size:8.2px;line-height:8.2px;color:#3a3f46;-webkit-text-stroke:0.12px #3a3f46;">5</div>
<div class="t" style="left:467.34px;top:481.92px;font-size:8.2px;line-height:8.2px;color:#3a3f46;-webkit-text-stroke:0.12px #3a3f46;">0</div>
<div class="t" style="left:470.50px;top:490.97px;font-size:8.5px;line-height:8.5px;color:#3a3f46;letter-spacing:0.683px;-webkit-text-stroke:0.12px #3a3f46;">03:00</div>
<div class="t" style="left:522.06px;top:490.97px;font-size:8.5px;line-height:8.5px;color:#3a3f46;letter-spacing:0.683px;-webkit-text-stroke:0.12px #3a3f46;">04:00</div>
<div class="t" style="left:573.62px;top:490.97px;font-size:8.5px;line-height:8.5px;color:#3a3f46;letter-spacing:0.683px;-webkit-text-stroke:0.12px #3a3f46;">05:00</div>
<div class="t" style="left:625.18px;top:490.97px;font-size:8.5px;line-height:8.5px;color:#3a3f46;letter-spacing:0.683px;-webkit-text-stroke:0.12px #3a3f46;">06:00</div>
<div class="t" style="left:676.74px;top:490.97px;font-size:8.5px;line-height:8.5px;color:#3a3f46;letter-spacing:0.683px;-webkit-text-stroke:0.12px #3a3f46;">07:00</div>
<div class="t" style="left:728.30px;top:490.97px;font-size:8.5px;line-height:8.5px;color:#3a3f46;letter-spacing:0.683px;-webkit-text-stroke:0.12px #3a3f46;">08:00</div>
<svg style="left:0;top:0" width="1200" height="749" viewBox="0 0 1200 749"><path d="M482.10 485.30 L486.10 437.00 L487.80 485.30 Z" fill="rgba(250,222,42,0.12)"/><path d="M482.10 485.30 L486.10 437.00 L487.80 485.30" fill="none" stroke="#f2c02a" stroke-width="1"/><path d="M482.10 485.30 L483.80 466.00 L486.30 466.00 L487.80 485.30 Z" fill="rgba(230,150,160,0.25)"/><path d="M482.10 485.30 L483.80 466.00 L486.30 466.00 L487.80 485.30" fill="none" stroke="#c27ac0" stroke-width="1"/><path d="M714.3 485.3 C715.6 473.5, 718.8 473.5, 720.1 485.3" fill="none" stroke="#5794f2" stroke-width="1"/><path d="M475.3 485.3 H783.1" stroke="#b877d9" stroke-width="1"/></svg>
<div class="a" style="left:463.50px;top:511.20px;width:9.00px;height:2.60px;background:#56a64b;border-radius:1.3px"></div>
<div class="t" style="left:478.30px;top:508.32px;font-size:8.8px;line-height:8.8px;color:#2c3136;letter-spacing:0.002px;-webkit-text-stroke:0.15px #2c3136;">{api="getbucketencryption", server="127.0.0.1:9000"}</div>
<div class="a" style="left:463.50px;top:526.40px;width:9.00px;height:2.60px;background:#e0b400;border-radius:1.3px"></div>
<div class="t" style="left:478.30px;top:523.62px;font-size:8.8px;line-height:8.8px;color:#2c3136;letter-spacing:-0.015px;-webkit-text-stroke:0.15px #2c3136;">{api="getbucketlocation", server="127.0.0.1:9000"}</div>
<div class="t" style="left:974.80px;top:476.90px;font-size:12.7px;line-height:12.7px;color:#5c6168;letter-spacing:-0.013px;">No data</div>
<div class="t" style="left:14.30px;top:581.43px;font-size:10.2px;line-height:10.2px;color:#2c3136;-webkit-text-stroke:0.12px #2c3136;">Pool 0 / Set 0 - Online Drives</div>
<div class="t" style="left:562.60px;top:593.88px;font-size:17.2px;line-height:17.2px;color:#6a6a6a;letter-spacing:-1.130px;-webkit-text-stroke:0.15px #6a6a6a;">12</div>
<div class="t" style="left:14.30px;top:614.43px;font-size:10.2px;line-height:10.2px;color:#2c3136;-webkit-text-stroke:0.12px #2c3136;">Pool 0 / Set 0 - Read Quorum</div>
<div class="t" style="left:571.04px;top:626.93px;font-size:17.2px;line-height:17.2px;color:#6a6a6a;-webkit-text-stroke:0.15px #6a6a6a;">8</div>
<div class="t" style="left:14.30px;top:647.43px;font-size:10.2px;line-height:10.2px;color:#2c3136;-webkit-text-stroke:0.12px #2c3136;">Pool 0 / Set 0 - Write Quorum</div>
<div class="t" style="left:571.04px;top:659.98px;font-size:17.2px;line-height:17.2px;color:#6a6a6a;-webkit-text-stroke:0.15px #6a6a6a;">8</div>
<div class="t" style="left:14.30px;top:680.43px;font-size:10.2px;line-height:10.2px;color:#2c3136;-webkit-text-stroke:0.12px #2c3136;">Pool 0 / Set 0 - Healing Drives</div>
<div class="t" style="left:571.04px;top:693.03px;font-size:17.2px;line-height:17.2px;color:#6a6a6a;-webkit-text-stroke:0.15px #6a6a6a;">0</div>
<div class="t" style="left:14.30px;top:713.43px;font-size:10.2px;line-height:10.2px;color:#2c3136;-webkit-text-stroke:0.12px #2c3136;">Pool 0 / Set 0 - Status</div>
<div class="t" style="left:571.04px;top:726.08px;font-size:17.2px;line-height:17.2px;color:#6a6a6a;-webkit-text-stroke:0.15px #6a6a6a;">1</div>
<svg style="left:0;top:0" width="1200" height="749" viewBox="0 0 1200 749"><defs><linearGradient id="dg" x1="0" y1="0" x2="1" y2="0"><stop offset="0" stop-color="#ababab"/><stop offset="0.5" stop-color="#878787"/><stop offset="1" stop-color="#ababab"/></linearGradient></defs><rect x="14.27" y="592.70" width="6.8" height="16.8" rx="1.3" fill="url(#dg)"/><rect x="22.29" y="592.70" width="6.8" height="16.8" rx="1.3" fill="url(#dg)"/><rect x="30.31" y="592.70" width="6.8" height="16.8" rx="1.3" fill="url(#dg)"/><rect x="38.33" y="592.70" width="6.8" height="16.8" rx="1.3" fill="url(#dg)"/><rect x="46.35" y="592.70" width="6.8" height="16.8" rx="1.3" fill="url(#dg)"/><rect x="54.37" y="592.70" width="6.8" height="16.8" rx="1.3" fill="url(#dg)"/><rect x="62.39" y="592.70" width="6.8" height="16.8" rx="1.3" fill="url(#dg)"/><rect x="70.41" y="592.70" width="6.8" height="16.8" rx="1.3" fill="url(#dg)"/><rect x="78.43" y="592.70" width="6.8" height="16.8" rx="1.3" fill="url(#dg)"/><rect x="86.45" y="592.70" width="6.8" height="16.8" rx="1.3" fill="url(#dg)"/><rect x="94.47" y="592.70" width="6.8" height="16.8" rx="1.3" fill="url(#dg)"/><rect x="102.49" y="592.70" width="6.8" height="16.8" rx="1.3" fill="url(#dg)"/><rect x="110.51" y="592.70" width="6.8" height="16.8" rx="1.3" fill="url(#dg)"/><rect x="118.53" y="592.70" width="6.8" height="16.8" rx="1.3" fill="url(#dg)"/><rect x="126.55" y="592.70" width="6.8" height="16.8" rx="1.3" fill="url(#dg)"/><rect x="134.57" y="592.70" width="6.8" height="16.8" rx="1.3" fill="url(#dg)"/><rect x="142.59" y="592.70" width="6.8" height="16.8" rx="1.3" fill="url(#dg)"/><rect x="150.61" y="592.70" width="6.8" height="16.8" rx="1.3" fill="url(#dg)"/><rect x="158.63" y="592.70" width="6.8" height="16.8" rx="1.3" fill="url(#dg)"/><rect x="166.65" y="592.70" width="6.8" height="16.8" rx="1.3" fill="url(#dg)"/><rect x="174.67" y="592.70" width="6.8" height="16.8" rx="1.3" fill="url(#dg)"/><rect x="182.69" y="592.70" width="6.8" height="16.8" rx="1.3" fill="url(#dg)"/><rect x="190.71" y="592.70" width="6.8" height="16.8" rx="1.3" fill="url(#dg)"/><rect x="198.73" y="592.70" width="6.8" height="16.8" rx="1.3" fill="url(#dg)"/><rect x="206.75" y="592.70" width="6.8" height="16.8" rx="1.3" fill="url(#dg)"/><rect x="214.77" y="592.70" width="6.8" height="16.8" rx="1.3" fill="url(#dg)"/><rect x="222.79" y="592.70" width="6.8" height="16.8" rx="1.3" fill="url(#dg)"/><rect x="230.81" y="592.70" width="6.8" height="16.8" rx="1.3" fill="url(#dg)"/><rect x="238.83" y="592.70" width="6.8" height="16.8" rx="1.3" fill="url(#dg)"/><rect x="246.85" y="592.70" width="6.8" height="16.8" rx="1.3" fill="url(#dg)"/><rect x="254.87" y="592.70" width="6.8" height="16.8" rx="1.3" fill="url(#dg)"/><rect x="262.89" y="592.70" width="6.8" height="16.8" rx="1.3" fill="url(#dg)"/><rect x="270.91" y="592.70" width="6.8" height="16.8" rx="1.3" fill="url(#dg)"/><rect x="278.93" y="592.70" width="6.8" height="16.8" rx="1.3" fill="url(#dg)"/><rect x="286.95" y="592.70" width="6.8" height="16.8" rx="1.3" fill="url(#dg)"/><rect x="294.97" y="592.70" width="6.8" height="16.8" rx="1.3" fill="url(#dg)"/><rect x="302.99" y="592.70" width="6.8" height="16.8" rx="1.3" fill="url(#dg)"/><rect x="311.01" y="592.70" width="6.8" height="16.8" rx="1.3" fill="url(#dg)"/><rect x="319.03" y="592.70" width="6.8" height="16.8" rx="1.3" fill="url(#dg)"/><rect x="327.05" y="592.70" width="6.8" height="16.8" rx="1.3" fill="url(#dg)"/><rect x="335.07" y="592.70" width="6.8" height="16.8" rx="1.3" fill="url(#dg)"/><rect x="343.09" y="592.70" width="6.8" height="16.8" rx="1.3" fill="url(#dg)"/><rect x="351.11" y="592.70" width="6.8" height="16.8" rx="1.3" fill="url(#dg)"/><rect x="359.13" y="592.70" width="6.8" height="16.8" rx="1.3" fill="url(#dg)"/><rect x="367.15" y="592.70" width="6.8" height="16.8" rx="1.3" fill="url(#dg)"/><rect x="375.17" y="592.70" width="6.8" height="16.8" rx="1.3" fill="url(#dg)"/><rect x="383.19" y="592.70" width="6.8" height="16.8" rx="1.3" fill="url(#dg)"/><rect x="391.21" y="592.70" width="6.8" height="16.8" rx="1.3" fill="url(#dg)"/><rect x="399.23" y="592.70" width="6.8" height="16.8" rx="1.3" fill="url(#dg)"/><rect x="407.25" y="592.70" width="6.8" height="16.8" rx="1.3" fill="url(#dg)"/><rect x="415.27" y="592.70" width="6.8" height="16.8" rx="1.3" fill="url(#dg)"/><rect x="423.29" y="592.70" width="6.8" height="16.8" rx="1.3" fill="url(#dg)"/><rect x="431.31" y="592.70" width="6.8" height="16.8" rx="1.3" fill="url(#dg)"/><rect x="439.33" y="592.70" width="6.8" height="16.8" rx="1.3" fill="url(#dg)"/><rect x="447.35" y="592.70" width="6.8" height="16.8" rx="1.3" fill="url(#dg)"/><rect x="455.37" y="592.70" width="6.8" height="16.8" rx="1.3" fill="url(#dg)"/><rect x="463.39" y="592.70" width="6.8" height="16.8" rx="1.3" fill="url(#dg)"/><rect x="471.41" y="592.70" width="6.8" height="16.8" rx="1.3" fill="url(#dg)"/><rect x="479.43" y="592.70" width="6.8" height="16.8" rx="1.3" fill="url(#dg)"/><rect x="14.27" y="625.70" width="6.8" height="16.8" rx="1.3" fill="url(#dg)"/><rect x="22.29" y="625.70" width="6.8" height="16.8" rx="1.3" fill="url(#dg)"/><rect x="30.31" y="625.70" width="6.8" height="16.8" rx="1.3" fill="url(#dg)"/><rect x="38.33" y="625.70" width="6.8" height="16.8" rx="1.3" fill="url(#dg)"/><rect x="46.35" y="625.70" width="6.8" height="16.8" rx="1.3" fill="url(#dg)"/><rect x="54.37" y="625.70" width="6.8" height="16.8" rx="1.3" fill="url(#dg)"/><rect x="62.39" y="625.70" width="6.8" height="16.8" rx="1.3" fill="url(#dg)"/><rect x="70.41" y="625.70" width="6.8" height="16.8" rx="1.3" fill="url(#dg)"/><rect x="78.43" y="625.70" width="6.8" height="16.8" rx="1.3" fill="url(#dg)"/><rect x="86.45" y="625.70" width="6.8" height="16.8" rx="1.3" fill="url(#dg)"/><rect x="94.47" y="625.70" width="6.8" height="16.8" rx="1.3" fill="url(#dg)"/><rect x="102.49" y="625.70" width="6.8" height="16.8" rx="1.3" fill="url(#dg)"/><rect x="110.51" y="625.70" width="6.8" height="16.8" rx="1.3" fill="url(#dg)"/><rect x="118.53" y="625.70" width="6.8" height="16.8" rx="1.3" fill="url(#dg)"/><rect x="126.55" y="625.70" width="6.8" height="16.8" rx="1.3" fill="url(#dg)"/><rect x="134.57" y="625.70" width="6.8" height="16.8" rx="1.3" fill="url(#dg)"/><rect x="142.59" y="625.70" width="6.8" height="16.8" rx="1.3" fill="url(#dg)"/><rect x="150.61" y="625.70" width="6.8" height="16.8" rx="1.3" fill="url(#dg)"/><rect x="158.63" y="625.70" width="6.8" height="16.8" rx="1.3" fill="url(#dg)"/><rect x="166.65" y="625.70" width="6.8" height="16.8" rx="1.3" fill="url(#dg)"/><rect x="174.67" y="625.70" width="6.8" height="16.8" rx="1.3" fill="url(#dg)"/><rect x="182.69" y="625.70" width="6.8" height="16.8" rx="1.3" fill="url(#dg)"/><rect x="190.71" y="625.70" width="6.8" height="16.8" rx="1.3" fill="url(#dg)"/><rect x="198.73" y="625.70" width="6.8" height="16.8" rx="1.3" fill="url(#dg)"/><rect x="206.75" y="625.70" width="6.8" height="16.8" rx="1.3" fill="url(#dg)"/><rect x="214.77" y="625.70" width="6.8" height="16.8" rx="1.3" fill="url(#dg)"/><rect x="222.79" y="625.70" width="6.8" height="16.8" rx="1.3" fill="url(#dg)"/><rect x="230.81" y="625.70" width="6.8" height="16.8" rx="1.3" fill="url(#dg)"/><rect x="238.83" y="625.70" width="6.8" height="16.8" rx="1.3" fill="url(#dg)"/><rect x="246.85" y="625.70" width="6.8" height="16.8" rx="1.3" fill="url(#dg)"/><rect x="254.87" y="625.70" width="6.8" height="16.8" rx="1.3" fill="url(#dg)"/><rect x="262.89" y="625.70" width="6.8" height="16.8" rx="1.3" fill="url(#dg)"/><rect x="270.91" y="625.70" width="6.8" height="16.8" rx="1.3" fill="url(#dg)"/><rect x="278.93" y="625.70" width="6.8" height="16.8" rx="1.3" fill="url(#dg)"/><rect x="286.95" y="625.70" width="6.8" height="16.8" rx="1.3" fill="url(#dg)"/><rect x="294.97" y="625.70" width="6.8" height="16.8" rx="1.3" fill="url(#dg)"/><rect x="302.99" y="625.70" width="6.8" height="16.8" rx="1.3" fill="url(#dg)"/><rect x="311.01" y="625.70" width="6.8" height="16.8" rx="1.3" fill="url(#dg)"/><rect x="319.03" y="625.70" width="6.8" height="16.8" rx="1.3" fill="url(#dg)"/><rect x="327.05" y="625.70" width="6.8" height="16.8" rx="1.3" fill="url(#dg)"/><rect x="335.07" y="625.70" width="6.8" height="16.8" rx="1.3" fill="#e9e9e9"/><rect x="343.09" y="625.70" width="6.8" height="16.8" rx="1.3" fill="#e9e9e9"/><rect x="351.11" y="625.70" width="6.8" height="16.8" rx="1.3" fill="#e9e9e9"/><rect x="359.13" y="625.70" width="6.8" height="16.8" rx="1.3" fill="#e9e9e9"/><rect x="367.15" y="625.70" width="6.8" height="16.8" rx="1.3" fill="#e9e9e9"/><rect x="375.17" y="625.70" width="6.8" height="16.8" rx="1.3" fill="#e9e9e9"/><rect x="383.19" y="625.70" width="6.8" height="16.8" rx="1.3" fill="#e9e9e9"/><rect x="391.21" y="625.70" width="6.8" height="16.8" rx="1.3" fill="#e9e9e9"/><rect x="399.23" y="625.70" width="6.8" height="16.8" rx="1.3" fill="#e9e9e9"/><rect x="407.25" y="625.70" width="6.8" height="16.8" rx="1.3" fill="#e9e9e9"/><rect x="415.27" y="625.70" width="6.8" height="16.8" rx="1.3" fill="#e9e9e9"/><rect x="423.29" y="625.70" width="6.8" height="16.8" rx="1.3" fill="#e9e9e9"/><rect x="431.31" y="625.70" width="6.8" height="16.8" rx="1.3" fill="#e9e9e9"/><rect x="439.33" y="625.70" width="6.8" height="16.8" rx="1.3" fill="#e9e9e9"/><rect x="447.35" y="625.70" width="6.8" height="16.8" rx="1.3" fill="#e9e9e9"/><rect x="455.37" y="625.70" width="6.8" height="16.8" rx="1.3" fill="#e9e9e9"/><rect x="463.39" y="625.70" width="6.8" height="16.8" rx="1.3" fill="#e9e9e9"/><rect x="471.41" y="625.70" width="6.8" height="16.8" rx="1.3" fill="#e9e9e9"/><rect x="479.43" y="625.70" width="6.8" height="16.8" rx="1.3" fill="#e9e9e9"/><rect x="14.27" y="658.70" width="6.8" height="16.8" rx="1.3" fill="url(#dg)"/><rect x="22.29" y="658.70" width="6.8" height="16.8" rx="1.3" fill="url(#dg)"/><rect x="30.31" y="658.70" width="6.8" height="16.8" rx="1.3" fill="url(#dg)"/><rect x="38.33" y="658.70" width="6.8" height="16.8" rx="1.3" fill="url(#dg)"/><rect x="46.35" y="658.70" width="6.8" height="16.8" rx="1.3" fill="url(#dg)"/><rect x="54.37" y="658.70" width="6.8" height="16.8" rx="1.3" fill="url(#dg)"/><rect x="62.39" y="658.70" width="6.8" height="16.8" rx="1.3" fill="url(#dg)"/><rect x="70.41" y="658.70" width="6.8" height="16.8" rx="1.3" fill="url(#dg)"/><rect x="78.43" y="658.70" width="6.8" height="16.8" rx="1.3" fill="url(#dg)"/><rect x="86.45" y="658.70" width="6.8" height="16.8" rx="1.3" fill="url(#dg)"/><rect x="94.47" y="658.70" width="6.8" height="16.8" rx="1.3" fill="url(#dg)"/><rect x="102.49" y="658.70" width="6.8" height="16.8" rx="1.3" fill="url(#dg)"/><rect x="110.51" y="658.70" width="6.8" height="16.8" rx="1.3" fill="url(#dg)"/><rect x="118.53" y="658.70" width="6.8" height="16.8" rx="1.3" fill="url(#dg)"/><rect x="126.55" y="658.70" width="6.8" height="16.8" rx="1.3" fill="url(#dg)"/><rect x="134.57" y="658.70" width="6.8" height="16.8" rx="1.3" fill="url(#dg)"/><rect x="142.59" y="658.70" width="6.8" height="16.8" rx="1.3" fill="url(#dg)"/><rect x="150.61" y="658.70" width="6.8" height="16.8" rx="1.3" fill="url(#dg)"/><rect x="158.63" y="658.70" width="6.8" height="16.8" rx="1.3" fill="url(#dg)"/><rect x="166.65" y="658.70" width="6.8" height="16.8" rx="1.3" fill="url(#dg)"/><rect x="174.67" y="658.70" width="6.8" height="16.8" rx="1.3" fill="url(#dg)"/><rect x="182.69" y="658.70" width="6.8" height="16.8" rx="1.3" fill="url(#dg)"/><rect x="190.71" y="658.70" width="6.8" height="16.8" rx="1.3" fill="url(#dg)"/><rect x="198.73" y="658.70" width="6.8" height="16.8" rx="1.3" fill="url(#dg)"/><rect x="206.75" y="658.70" width="6.8" height="16.8" rx="1.3" fill="url(#dg)"/><rect x="214.77" y="658.70" width="6.8" height="16.8" rx="1.3" fill="url(#dg)"/><rect x="222.79" y="658.70" width="6.8" height="16.8" rx="1.3" fill="url(#dg)"/><rect x="230.81" y="658.70" width="6.8" height="16.8" rx="1.3" fill="url(#dg)"/><rect x="238.83" y="658.70" width="6.8" height="16.8" rx="1.3" fill="url(#dg)"/><rect x="246.85" y="658.70" width="6.8" height="16.8" rx="1.3" fill="url(#dg)"/><rect x="254.87" y="658.70" width="6.8" height="16.8" rx="1.3" fill="url(#dg)"/><rect x="262.89" y="658.70" width="6.8" height="16.8" rx="1.3" fill="url(#dg)"/><rect x="270.91" y="658.70" width="6.8" height="16.8" rx="1.3" fill="url(#dg)"/><rect x="278.93" y="658.70" width="6.8" height="16.8" rx="1.3" fill="url(#dg)"/><rect x="286.95" y="658.70" width="6.8" height="16.8" rx="1.3" fill="url(#dg)"/><rect x="294.97" y="658.70" width="6.8" height="16.8" rx="1.3" fill="url(#dg)"/><rect x="302.99" y="658.70" width="6.8" height="16.8" rx="1.3" fill="url(#dg)"/><rect x="311.01" y="658.70" width="6.8" height="16.8" rx="1.3" fill="url(#dg)"/><rect x="319.03" y="658.70" width="6.8" height="16.8" rx="1.3" fill="url(#dg)"/><rect x="327.05" y="658.70" width="6.8" height="16.8" rx="1.3" fill="url(#dg)"/><rect x="335.07" y="658.70" width="6.8" height="16.8" rx="1.3" fill="#e9e9e9"/><rect x="343.09" y="658.70" width="6.8" height="16.8" rx="1.3" fill="#e9e9e9"/><rect x="351.11" y="658.70" width="6.8" height="16.8" rx="1.3" fill="#e9e9e9"/><rect x="359.13" y="658.70" width="6.8" height="16.8" rx="1.3" fill="#e9e9e9"/><rect x="367.15" y="658.70" width="6.8" height="16.8" rx="1.3" fill="#e9e9e9"/><rect x="375.17" y="658.70" width="6.8" height="16.8" rx="1.3" fill="#e9e9e9"/><rect x="383.19" y="658.70" width="6.8" height="16.8" rx="1.3" fill="#e9e9e9"/><rect x="391.21" y="658.70" width="6.8" height="16.8" rx="1.3" fill="#e9e9e9"/><rect x="399.23" y="658.70" width="6.8" height="16.8" rx="1.3" fill="#e9e9e9"/><rect x="407.25" y="658.70" width="6.8" height="16.8" rx="1.3" fill="#e9e9e9"/><rect x="415.27" y="658.70" width="6.8" height="16.8" rx="1.3" fill="#e9e9e9"/><rect x="423.29" y="658.70" width="6.8" height="16.8" rx="1.3" fill="#e9e9e9"/><rect x="431.31" y="658.70" width="6.8" height="16.8" rx="1.3" fill="#e9e9e9"/><rect x="439.33" y="658.70" width="6.8" height="16.8" rx="1.3" fill="#e9e9e9"/><rect x="447.35" y="658.70" width="6.8" height="16.8" rx="1.3" fill="#e9e9e9"/><rect x="455.37" y="658.70" width="6.8" height="16.8" rx="1.3" fill="#e9e9e9"/><rect x="463.39" y="658.70" width="6.8" height="16.8" rx="1.3" fill="#e9e9e9"/><rect x="471.41" y="658.70" width="6.8" height="16.8" rx="1.3" fill="#e9e9e9"/><rect x="479.43" y="658.70" width="6.8" height="16.8" rx="1.3" fill="#e9e9e9"/><rect x="14.27" y="691.70" width="6.8" height="16.8" rx="1.3" fill="url(#dg)"/><rect x="22.29" y="691.70" width="6.8" height="16.8" rx="1.3" fill="#e9e9e9"/><rect x="30.31" y="691.70" width="6.8" height="16.8" rx="1.3" fill="#e9e9e9"/><rect x="38.33" y="691.70" width="6.8" height="16.8" rx="1.3" fill="#e9e9e9"/><rect x="46.35" y="691.70" width="6.8" height="16.8" rx="1.3" fill="#e9e9e9"/><rect x="54.37" y="691.70" width="6.8" height="16.8" rx="1.3" fill="#e9e9e9"/><rect x="62.39" y="691.70" width="6.8" height="16.8" rx="1.3" fill="#e9e9e9"/><rect x="70.41" y="691.70" width="6.8" height="16.8" rx="1.3" fill="#e9e9e9"/><rect x="78.43" y="691.70" width="6.8" height="16.8" rx="1.3" fill="#e9e9e9"/><rect x="86.45" y="691.70" width="6.8" height="16.8" rx="1.3" fill="#e9e9e9"/><rect x="94.47" y="691.70" width="6.8" height="16.8" rx="1.3" fill="#e9e9e9"/><rect x="102.49" y="691.70" width="6.8" height="16.8" rx="1.3" fill="#e9e9e9"/><rect x="110.51" y="691.70" width="6.8" height="16.8" rx="1.3" fill="#e9e9e9"/><rect x="118.53" y="691.70" width="6.8" height="16.8" rx="1.3" fill="#e9e9e9"/><rect x="126.55" y="691.70" width="6.8" height="16.8" rx="1.3" fill="#e9e9e9"/><rect x="134.57" y="691.70" width="6.8" height="16.8" rx="1.3" fill="#e9e9e9"/><rect x="142.59" y="691.70" width="6.8" height="16.8" rx="1.3" fill="#e9e9e9"/><rect x="150.61" y="691.70" width="6.8" height="16.8" rx="1.3" fill="#e9e9e9"/><rect x="158.63" y="691.70" width="6.8" height="16.8" rx="1.3" fill="#e9e9e9"/><rect x="166.65" y="691.70" width="6.8" height="16.8" rx="1.3" fill="#e9e9e9"/><rect x="174.67" y="691.70" width="6.8" height="16.8" rx="1.3" fill="#e9e9e9"/><rect x="182.69" y="691.70" width="6.8" height="16.8" rx="1.3" fill="#e9e9e9"/><rect x="190.71" y="691.70" width="6.8" height="16.8" rx="1.3" fill="#e9e9e9"/><rect x="198.73" y="691.70" width="6.8" height="16.8" rx="1.3" fill="#e9e9e9"/><rect x="206.75" y="691.70" width="6.8" height="16.8" rx="1.3" fill="#e9e9e9"/><rect x="214.77" y="691.70" width="6.8" height="16.8" rx="1.3" fill="#e9e9e9"/><rect x="222.79" y="691.70" width="6.8" height="16.8" rx="1.3" fill="#e9e9e9"/><rect x="230.81" y="691.70" width="6.8" height="16.8" rx="1.3" fill="#e9e9e9"/><rect x="238.83" y="691.70" width="6.8" height="16.8" rx="1.3" fill="#e9e9e9"/><rect x="246.85" y="691.70" width="6.8" height="16.8" rx="1.3" fill="#e9e9e9"/><rect x="254.87" y="691.70" width="6.8" height="16.8" rx="1.3" fill="#e9e9e9"/><rect x="262.89" y="691.70" width="6.8" height="16.8" rx="1.3" fill="#e9e9e9"/><rect x="270.91" y="691.70" width="6.8" height="16.8" rx="1.3" fill="#e9e9e9"/><rect x="278.93" y="691.70" width="6.8" height="16.8" rx="1.3" fill="#e9e9e9"/><rect x="286.95" y="691.70" width="6.8" height="16.8" rx="1.3" fill="#e9e9e9"/><rect x="294.97" y="691.70" width="6.8" height="16.8" rx="1.3" fill="#e9e9e9"/><rect x="302.99" y="691.70" width="6.8" height="16.8" rx="1.3" fill="#e9e9e9"/><rect x="311.01" y="691.70" width="6.8" height="16.8" rx="1.3" fill="#e9e9e9"/><rect x="319.03" y="691.70" width="6.8" height="16.8" rx="1.3" fill="#e9e9e9"/><rect x="327.05" y="691.70" width="6.8" height="16.8" rx="1.3" fill="#e9e9e9"/><rect x="335.07" y="691.70" width="6.8" height="16.8" rx="1.3" fill="#e9e9e9"/><rect x="343.09" y="691.70" width="6.8" height="16.8" rx="1.3" fill="#e9e9e9"/><rect x="351.11" y="691.70" width="6.8" height="16.8" rx="1.3" fill="#e9e9e9"/><rect x="359.13" y="691.70" width="6.8" height="16.8" rx="1.3" fill="#e9e9e9"/><rect x="367.15" y="691.70" width="6.8" height="16.8" rx="1.3" fill="#e9e9e9"/><rect x="375.17" y="691.70" width="6.8" height="16.8" rx="1.3" fill="#e9e9e9"/><rect x="383.19" y="691.70" width="6.8" height="16.8" rx="1.3" fill="#e9e9e9"/><rect x="391.21" y="691.70" width="6.8" height="16.8" rx="1.3" fill="#e9e9e9"/><rect x="399.23" y="691.70" width="6.8" height="16.8" rx="1.3" fill="#e9e9e9"/><rect x="407.25" y="691.70" width="6.8" height="16.8" rx="1.3" fill="#e9e9e9"/><rect x="415.27" y="691.70" width="6.8" height="16.8" rx="1.3" fill="#e9e9e9"/><rect x="423.29" y="691.70" width="6.8" height="16.8" rx="1.3" fill="#e9e9e9"/><rect x="431.31" y="691.70" width="6.8" height="16.8" rx="1.3" fill="#e9e9e9"/><rect x="439.33" y="691.70" width="6.8" height="16.8" rx="1.3" fill="#e9e9e9"/><rect x="447.35" y="691.70" width="6.8" height="16.8" rx="1.3" fill="#e9e9e9"/><rect x="455.37" y="691.70" width="6.8" height="16.8" rx="1.3" fill="#e9e9e9"/><rect x="463.39" y="691.70" width="6.8" height="16.8" rx="1.3" fill="#e9e9e9"/><rect x="471.41" y="691.70" width="6.8" height="16.8" rx="1.3" fill="#e9e9e9"/><rect x="479.43" y="691.70" width="6.8" height="16.8" rx="1.3" fill="#e9e9e9"/><rect x="14.27" y="724.70" width="6.8" height="16.8" rx="1.3" fill="url(#dg)"/><rect x="22.29" y="724.70" width="6.8" height="16.8" rx="1.3" fill="url(#dg)"/><rect x="30.31" y="724.70" width="6.8" height="16.8" rx="1.3" fill="url(#dg)"/><rect x="38.33" y="724.70" width="6.8" height="16.8" rx="1.3" fill="url(#dg)"/><rect x="46.35" y="724.70" width="6.8" height="16.8" rx="1.3" fill="url(#dg)"/><rect x="54.37" y="724.70" width="6.8" height="16.8" rx="1.3" fill="#e9e9e9"/><rect x="62.39" y="724.70" width="6.8" height="16.8" rx="1.3" fill="#e9e9e9"/><rect x="70.41" y="724.70" width="6.8" height="16.8" rx="1.3" fill="#e9e9e9"/><rect x="78.43" y="724.70" width="6.8" height="16.8" rx="1.3" fill="#e9e9e9"/><rect x="86.45" y="724.70" width="6.8" height="16.8" rx="1.3" fill="#e9e9e9"/><rect x="94.47" y="724.70" width="6.8" height="16.8" rx="1.3" fill="#e9e9e9"/><rect x="102.49" y="724.70" width="6.8" height="16.8" rx="1.3" fill="#e9e9e9"/><rect x="110.51" y="724.70" width="6.8" height="16.8" rx="1.3" fill="#e9e9e9"/><rect x="118.53" y="724.70" width="6.8" height="16.8" rx="1.3" fill="#e9e9e9"/><rect x="126.55" y="724.70" width="6.8" height="16.8" rx="1.3" fill="#e9e9e9"/><rect x="134.57" y="724.70" width="6.8" height="16.8" rx="1.3" fill="#e9e9e9"/><rect x="142.59" y="724.70" width="6.8" height="16.8" rx="1.3" fill="#e9e9e9"/><rect x="150.61" y="724.70" width="6.8" height="16.8" rx="1.3" fill="#e9e9e9"/><rect x="158.63" y="724.70" width="6.8" height="16.8" rx="1.3" fill="#e9e9e9"/><rect x="166.65" y="724.70" width="6.8" height="16.8" rx="1.3" fill="#e9e9e9"/><rect x="174.67" y="724.70" width="6.8" height="16.8" rx="1.3" fill="#e9e9e9"/><rect x="182.69" y="724.70" width="6.8" height="16.8" rx="1.3" fill="#e9e9e9"/><rect x="190.71" y="724.70" width="6.8" height="16.8" rx="1.3" fill="#e9e9e9"/><rect x="198.73" y="724.70" width="6.8" height="16.8" rx="1.3" fill="#e9e9e9"/><rect x="206.75" y="724.70" width="6.8" height="16.8" rx="1.3" fill="#e9e9e9"/><rect x="214.77" y="724.70" width="6.8" height="16.8" rx="1.3" fill="#e9e9e9"/><rect x="222.79" y="724.70" width="6.8" height="16.8" rx="1.3" fill="#e9e9e9"/><rect x="230.81" y="724.70" width="6.8" height="16.8" rx="1.3" fill="#e9e9e9"/><rect x="238.83" y="724.70" width="6.8" height="16.8" rx="1.3" fill="#e9e9e9"/><rect x="246.85" y="724.70" width="6.8" height="16.8" rx="1.3" fill="#e9e9e9"/><rect x="254.87" y="724.70" width="6.8" height="16.8" rx="1.3" fill="#e9e9e9"/><rect x="262.89" y="724.70" width="6.8" height="16.8" rx="1.3" fill="#e9e9e9"/><rect x="270.91" y="724.70" width="6.8" height="16.8" rx="1.3" fill="#e9e9e9"/><rect x="278.93" y="724.70" width="6.8" height="16.8" rx="1.3" fill="#e9e9e9"/><rect x="286.95" y="724.70" width="6.8" height="16.8" rx="1.3" fill="#e9e9e9"/><rect x="294.97" y="724.70" width="6.8" height="16.8" rx="1.3" fill="#e9e9e9"/><rect x="302.99" y="724.70" width="6.8" height="16.8" rx="1.3" fill="#e9e9e9"/><rect x="311.01" y="724.70" width="6.8" height="16.8" rx="1.3" fill="#e9e9e9"/><rect x="319.03" y="724.70" width="6.8" height="16.8" rx="1.3" fill="#e9e9e9"/><rect x="327.05" y="724.70" width="6.8" height="16.8" rx="1.3" fill="#e9e9e9"/><rect x="335.07" y="724.70" width="6.8" height="16.8" rx="1.3" fill="#e9e9e9"/><rect x="343.09" y="724.70" width="6.8" height="16.8" rx="1.3" fill="#e9e9e9"/><rect x="351.11" y="724.70" width="6.8" height="16.8" rx="1.3" fill="#e9e9e9"/><rect x="359.13" y="724.70" width="6.8" height="16.8" rx="1.3" fill="#e9e9e9"/><rect x="367.15" y="724.70" width="6.8" height="16.8" rx="1.3" fill="#e9e9e9"/><rect x="375.17" y="724.70" width="6.8" height="16.8" rx="1.3" fill="#e9e9e9"/><rect x="383.19" y="724.70" width="6.8" height="16.8" rx="1.3" fill="#e9e9e9"/><rect x="391.21" y="724.70" width="6.8" height="16.8" rx="1.3" fill="#e9e9e9"/><rect x="399.23" y="724.70" width="6.8" height="16.8" rx="1.3" fill="#e9e9e9"/><rect x="407.25" y="724.70" width="6.8" height="16.8" rx="1.3" fill="#e9e9e9"/><rect x="415.27" y="724.70" width="6.8" height="16.8" rx="1.3" fill="#e9e9e9"/><rect x="423.29" y="724.70" width="6.8" height="16.8" rx="1.3" fill="#e9e9e9"/><rect x="431.31" y="724.70" width="6.8" height="16.8" rx="1.3" fill="#e9e9e9"/><rect x="439.33" y="724.70" width="6.8" height="16.8" rx="1.3" fill="#e9e9e9"/><rect x="447.35" y="724.70" width="6.8" height="16.8" rx="1.3" fill="#e9e9e9"/><rect x="455.37" y="724.70" width="6.8" height="16.8" rx="1.3" fill="#e9e9e9"/><rect x="463.39" y="724.70" width="6.8" height="16.8" rx="1.3" fill="#e9e9e9"/><rect x="471.41" y="724.70" width="6.8" height="16.8" rx="1.3" fill="#e9e9e9"/><rect x="479.43" y="724.70" width="6.8" height="16.8" rx="1.3" fill="#e9e9e9"/></svg>
<svg style="left:0;top:0" width="1200" height="749" viewBox="0 0 1200 749"><defs><linearGradient id="mg0" x1="0" y1="0" x2="1" y2="0"><stop offset="0" stop-color="#89bf7f"/><stop offset="0.5" stop-color="#64ab57"/><stop offset="1" stop-color="#89bf7f"/></linearGradient><linearGradient id="mg1" x1="0" y1="0" x2="1" y2="0"><stop offset="0" stop-color="#8dc07e"/><stop offset="0.5" stop-color="#69ac55"/><stop offset="1" stop-color="#8dc07e"/></linearGradient><linearGradient id="mg2" x1="0" y1="0" x2="1" y2="0"><stop offset="0" stop-color="#91c17c"/><stop offset="0.5" stop-color="#6ead53"/><stop offset="1" stop-color="#91c17c"/></linearGradient><linearGradient id="mg3" x1="0" y1="0" x2="1" y2="0"><stop offset="0" stop-color="#94c17c"/><stop offset="0.5" stop-color="#72ae52"/><stop offset="1" stop-color="#94c17c"/></linearGradient><linearGradient id="mg4" x1="0" y1="0" x2="1" y2="0"><stop offset="0" stop-color="#98c27a"/><stop offset="0.5" stop-color="#77af50"/><stop offset="1" stop-color="#98c27a"/></linearGradient><linearGradient id="mg5" x1="0" y1="0" x2="1" y2="0"><stop offset="0" stop-color="#9bc378"/><stop offset="0.5" stop-color="#7cb04e"/><stop offset="1" stop-color="#9bc378"/></linearGradient><linearGradient id="mg6" x1="0" y1="0" x2="1" y2="0"><stop offset="0" stop-color="#9ec477"/><stop offset="0.5" stop-color="#80b24c"/><stop offset="1" stop-color="#9ec477"/></linearGradient><linearGradient id="mg7" x1="0" y1="0" x2="1" y2="0"><stop offset="0" stop-color="#a2c575"/><stop offset="0.5" stop-color="#85b34a"/><stop offset="1" stop-color="#a2c575"/></linearGradient><linearGradient id="mg8" x1="0" y1="0" x2="1" y2="0"><stop offset="0" stop-color="#a6c674"/><stop offset="0.5" stop-color="#8ab448"/><stop offset="1" stop-color="#a6c674"/></linearGradient><linearGradient id="mg9" x1="0" y1="0" x2="1" y2="0"><stop offset="0" stop-color="#aac772"/><stop offset="0.5" stop-color="#8fb546"/><stop offset="1" stop-color="#aac772"/></linearGradient><linearGradient id="mg10" x1="0" y1="0" x2="1" y2="0"><stop offset="0" stop-color="#aec872"/><stop offset="0.5" stop-color="#94b645"/><stop offset="1" stop-color="#aec872"/></linearGradient><linearGradient id="mg11" x1="0" y1="0" x2="1" y2="0"><stop offset="0" stop-color="#b1c870"/><stop offset="0.5" stop-color="#98b743"/><stop offset="1" stop-color="#b1c870"/></linearGradient><linearGradient id="mg12" x1="0" y1="0" x2="1" y2="0"><stop offset="0" stop-color="#b5c96f"/><stop offset="0.5" stop-color="#9db841"/><stop offset="1" stop-color="#b5c96f"/></linearGradient><linearGradient id="mg13" x1="0" y1="0" x2="1" y2="0"><stop offset="0" stop-color="#b7c96d"/><stop offset="0.5" stop-color="#a0b83f"/><stop offset="1" stop-color="#b7c96d"/></linearGradient><linearGradient id="mg14" x1="0" y1="0" x2="1" y2="0"><stop offset="0" stop-color="#bac96c"/><stop offset="0.5" stop-color="#a4b83e"/><stop offset="1" stop-color="#bac96c"/></linearGradient><linearGradient id="mg15" x1="0" y1="0" x2="1" y2="0"><stop offset="0" stop-color="#bcc96b"/><stop offset="0.5" stop-color="#a7b83c"/><stop offset="1" stop-color="#bcc96b"/></linearGradient><linearGradient id="mg16" x1="0" y1="0" x2="1" y2="0"><stop offset="0" stop-color="#bfc96a"/><stop offset="0.5" stop-color="#abb83b"/><stop offset="1" stop-color="#bfc96a"/></linearGradient><linearGradient id="mg17" x1="0" y1="0" x2="1" y2="0"><stop offset="0" stop-color="#c1c969"/><stop offset="0.5" stop-color="#aeb839"/><stop offset="1" stop-color="#c1c969"/></linearGradient><linearGradient id="mg18" x1="0" y1="0" x2="1" y2="0"><stop offset="0" stop-color="#c4c968"/><stop offset="0.5" stop-color="#b2b838"/><stop offset="1" stop-color="#c4c968"/></linearGradient><linearGradient id="mg19" x1="0" y1="0" x2="1" y2="0"><stop offset="0" stop-color="#c7ca66"/><stop offset="0.5" stop-color="#b5b936"/><stop offset="1" stop-color="#c7ca66"/></linearGradient><linearGradient id="mg20" x1="0" y1="0" x2="1" y2="0"><stop offset="0" stop-color="#c9ca65"/><stop offset="0.5" stop-color="#b8b934"/><stop offset="1" stop-color="#c9ca65"/></linearGradient><linearGradient id="mg21" x1="0" y1="0" x2="1" y2="0"><stop offset="0" stop-color="#ccca64"/><stop offset="0.5" stop-color="#bcb933"/><stop offset="1" stop-color="#ccca64"/></linearGradient><linearGradient id="mg22" x1="0" y1="0" x2="1" y2="0"><stop offset="0" stop-color="#ceca62"/><stop offset="0.5" stop-color="#bfb931"/><stop offset="1" stop-color="#ceca62"/></linearGradient><linearGradient id="mg23" x1="0" y1="0" x2="1" y2="0"><stop offset="0" stop-color="#d1ca62"/><stop offset="0.5" stop-color="#c3b930"/><stop offset="1" stop-color="#d1ca62"/></linearGradient><linearGradient id="mg24" x1="0" y1="0" x2="1" y2="0"><stop offset="0" stop-color="#d4ca60"/><stop offset="0.5" stop-color="#c6b92e"/><stop offset="1" stop-color="#d4ca60"/></linearGradient><linearGradient id="mg25" x1="0" y1="0" x2="1" y2="0"><stop offset="0" stop-color="#d6c860"/><stop offset="0.5" stop-color="#c9b72e"/><stop offset="1" stop-color="#d6c860"/></linearGradient><linearGradient id="mg26" x1="0" y1="0" x2="1" y2="0"><stop offset="0" stop-color="#d7c75f"/><stop offset="0.5" stop-color="#cbb52d"/><stop offset="1" stop-color="#d7c75f"/></linearGradient><linearGradient id="mg27" x1="0" y1="0" x2="1" y2="0"><stop offset="0" stop-color="#dac55f"/><stop offset="0.5" stop-color="#ceb32d"/><stop offset="1" stop-color="#dac55f"/></linearGradient><linearGradient id="mg28" x1="0" y1="0" x2="1" y2="0"><stop offset="0" stop-color="#dcc45f"/><stop offset="0.5" stop-color="#d1b12c"/><stop offset="1" stop-color="#dcc45f"/></linearGradient><linearGradient id="mg29" x1="0" y1="0" x2="1" y2="0"><stop offset="0" stop-color="#dec35f"/><stop offset="0.5" stop-color="#d3b02c"/><stop offset="1" stop-color="#dec35f"/></linearGradient><linearGradient id="mg30" x1="0" y1="0" x2="1" y2="0"><stop offset="0" stop-color="#e0c15e"/><stop offset="0.5" stop-color="#d6ae2b"/><stop offset="1" stop-color="#e0c15e"/></linearGradient><linearGradient id="mg31" x1="0" y1="0" x2="1" y2="0"><stop offset="0" stop-color="#e2c05e"/><stop offset="0.5" stop-color="#d9ac2b"/><stop offset="1" stop-color="#e2c05e"/></linearGradient><linearGradient id="mg32" x1="0" y1="0" x2="1" y2="0"><stop offset="0" stop-color="#e4be5d"/><stop offset="0.5" stop-color="#dbaa2a"/><stop offset="1" stop-color="#e4be5d"/></linearGradient><linearGradient id="mg33" x1="0" y1="0" x2="1" y2="0"><stop offset="0" stop-color="#e6bd5d"/><stop offset="0.5" stop-color="#dea82a"/><stop offset="1" stop-color="#e6bd5d"/></linearGradient><linearGradient id="mg34" x1="0" y1="0" x2="1" y2="0"><stop offset="0" stop-color="#e7bb5e"/><stop offset="0.5" stop-color="#dfa52b"/><stop offset="1" stop-color="#e7bb5e"/></linearGradient><linearGradient id="mg35" x1="0" y1="0" x2="1" y2="0"><stop offset="0" stop-color="#e7b85f"/><stop offset="0.5" stop-color="#e0a22c"/><stop offset="1" stop-color="#e7b85f"/></linearGradient><linearGradient id="mg36" x1="0" y1="0" x2="1" y2="0"><stop offset="0" stop-color="#e8b65f"/><stop offset="0.5" stop-color="#e19f2c"/><stop offset="1" stop-color="#e8b65f"/></linearGradient><linearGradient id="mg37" x1="0" y1="0" x2="1" y2="0"><stop offset="0" stop-color="#e9b45f"/><stop offset="0.5" stop-color="#e29c2d"/><stop offset="1" stop-color="#e9b45f"/></linearGradient><linearGradient id="mg38" x1="0" y1="0" x2="1" y2="0"><stop offset="0" stop-color="#eab160"/><stop offset="0.5" stop-color="#e3992e"/><stop offset="1" stop-color="#eab160"/></linearGradient><linearGradient id="mg39" x1="0" y1="0" x2="1" y2="0"><stop offset="0" stop-color="#eaaf61"/><stop offset="0.5" stop-color="#e4962f"/><stop offset="1" stop-color="#eaaf61"/></linearGradient></defs><rect x="609.00" y="578.3" width="6.8" height="164" rx="1.3" fill="url(#mg0)"/><rect x="617.02" y="578.3" width="6.8" height="164" rx="1.3" fill="url(#mg1)"/><rect x="625.04" y="578.3" width="6.8" height="164" rx="1.3" fill="url(#mg2)"/><rect x="633.06" y="578.3" width="6.8" height="164" rx="1.3" fill="url(#mg3)"/><rect x="641.08" y="578.3" width="6.8" height="164" rx="1.3" fill="url(#mg4)"/><rect x="649.10" y="578.3" width="6.8" height="164" rx="1.3" fill="url(#mg5)"/><rect x="657.12" y="578.3" width="6.8" height="164" rx="1.3" fill="url(#mg6)"/><rect x="665.14" y="578.3" width="6.8" height="164" rx="1.3" fill="url(#mg7)"/><rect x="673.16" y="578.3" width="6.8" height="164" rx="1.3" fill="url(#mg8)"/><rect x="681.18" y="578.3" width="6.8" height="164" rx="1.3" fill="url(#mg9)"/><rect x="689.20" y="578.3" width="6.8" height="164" rx="1.3" fill="url(#mg10)"/><rect x="697.22" y="578.3" width="6.8" height="164" rx="1.3" fill="url(#mg11)"/><rect x="705.24" y="578.3" width="6.8" height="164" rx="1.3" fill="url(#mg12)"/><rect x="713.26" y="578.3" width="6.8" height="164" rx="1.3" fill="url(#mg13)"/><rect x="721.28" y="578.3" width="6.8" height="164" rx="1.3" fill="url(#mg14)"/><rect x="729.30" y="578.3" width="6.8" height="164" rx="1.3" fill="url(#mg15)"/><rect x="737.32" y="578.3" width="6.8" height="164" rx="1.3" fill="url(#mg16)"/><rect x="745.34" y="578.3" width="6.8" height="164" rx="1.3" fill="url(#mg17)"/><rect x="753.36" y="578.3" width="6.8" height="164" rx="1.3" fill="url(#mg18)"/><rect x="761.38" y="578.3" width="6.8" height="164" rx="1.3" fill="url(#mg19)"/><rect x="769.40" y="578.3" width="6.8" height="164" rx="1.3" fill="url(#mg20)"/><rect x="777.42" y="578.3" width="6.8" height="164" rx="1.3" fill="url(#mg21)"/><rect x="785.44" y="578.3" width="6.8" height="164" rx="1.3" fill="url(#mg22)"/><rect x="793.46" y="578.3" width="6.8" height="164" rx="1.3" fill="url(#mg23)"/><rect x="801.48" y="578.3" width="6.8" height="164" rx="1.3" fill="url(#mg24)"/><rect x="809.50" y="578.3" width="6.8" height="164" rx="1.3" fill="url(#mg25)"/><rect x="817.52" y="578.3" width="6.8" height="164" rx="1.3" fill="url(#mg26)"/><rect x="825.54" y="578.3" width="6.8" height="164" rx="1.3" fill="url(#mg27)"/><rect x="833.56" y="578.3" width="6.8" height="164" rx="1.3" fill="url(#mg28)"/><rect x="841.58" y="578.3" width="6.8" height="164" rx="1.3" fill="url(#mg29)"/><rect x="849.60" y="578.3" width="6.8" height="164" rx="1.3" fill="url(#mg30)"/><rect x="857.62" y="578.3" width="6.8" height="164" rx="1.3" fill="url(#mg31)"/><rect x="865.64" y="578.3" width="6.8" height="164" rx="1.3" fill="url(#mg32)"/><rect x="873.66" y="578.3" width="6.8" height="164" rx="1.3" fill="url(#mg33)"/><rect x="881.68" y="578.3" width="6.8" height="164" rx="1.3" fill="url(#mg34)"/><rect x="889.70" y="578.3" width="6.8" height="164" rx="1.3" fill="url(#mg35)"/><rect x="897.72" y="578.3" width="6.8" height="164" rx="1.3" fill="url(#mg36)"/><rect x="905.74" y="578.3" width="6.8" height="164" rx="1.3" fill="url(#mg37)"/><rect x="913.76" y="578.3" width="6.8" height="164" rx="1.3" fill="url(#mg38)"/><rect x="921.78" y="578.3" width="6.8" height="164" rx="1.3" fill="url(#mg39)"/><rect x="929.80" y="578.3" width="6.8" height="164" rx="1.3" fill="#f9eada"/><rect x="937.82" y="578.3" width="6.8" height="164" rx="1.3" fill="#f9e9da"/><rect x="945.84" y="578.3" width="6.8" height="164" rx="1.3" fill="#f9e8da"/><rect x="953.86" y="578.3" width="6.8" height="164" rx="1.3" fill="#fae7da"/><rect x="961.88" y="578.3" width="6.8" height="164" rx="1.3" fill="#fae6da"/><rect x="969.90" y="578.3" width="6.8" height="164" rx="1.3" fill="#fae6da"/><rect x="977.92" y="578.3" width="6.8" height="164" rx="1.3" fill="#fae5da"/><rect x="985.94" y="578.3" width="6.8" height="164" rx="1.3" fill="#fae4da"/><rect x="993.96" y="578.3" width="6.8" height="164" rx="1.3" fill="#fbe3da"/><rect x="1001.98" y="578.3" width="6.8" height="164" rx="1.3" fill="#fbe2da"/><rect x="1010.00" y="578.3" width="6.8" height="164" rx="1.3" fill="#fbe1da"/><rect x="1018.02" y="578.3" width="6.8" height="164" rx="1.3" fill="#fbe0da"/><rect x="1026.04" y="578.3" width="6.8" height="164" rx="1.3" fill="#fadfda"/><rect x="1034.06" y="578.3" width="6.8" height="164" rx="1.3" fill="#fadedb"/><rect x="1042.08" y="578.3" width="6.8" height="164" rx="1.3" fill="#fadedb"/><rect x="1050.10" y="578.3" width="6.8" height="164" rx="1.3" fill="#fadddb"/><rect x="1058.12" y="578.3" width="6.8" height="164" rx="1.3" fill="#fadcdc"/><rect x="1066.14" y="578.3" width="6.8" height="164" rx="1.3" fill="#f9dbdc"/><rect x="1074.16" y="578.3" width="6.8" height="164" rx="1.3" fill="#f9dadc"/></svg>
<div class="t" style="left:1109.50px;top:649.92px;font-size:22.8px;line-height:22.8px;color:#e68a24;letter-spacing:0.482px;-webkit-text-stroke:0.25px #e68a24;">764</div>
<div class="t" style="left:1152.90px;top:658.25px;font-size:13.0px;line-height:13.0px;color:#e68a24;letter-spacing:-0.144px;-webkit-text-stroke:0.25px #e68a24;">MiB</div>
</body></html>
